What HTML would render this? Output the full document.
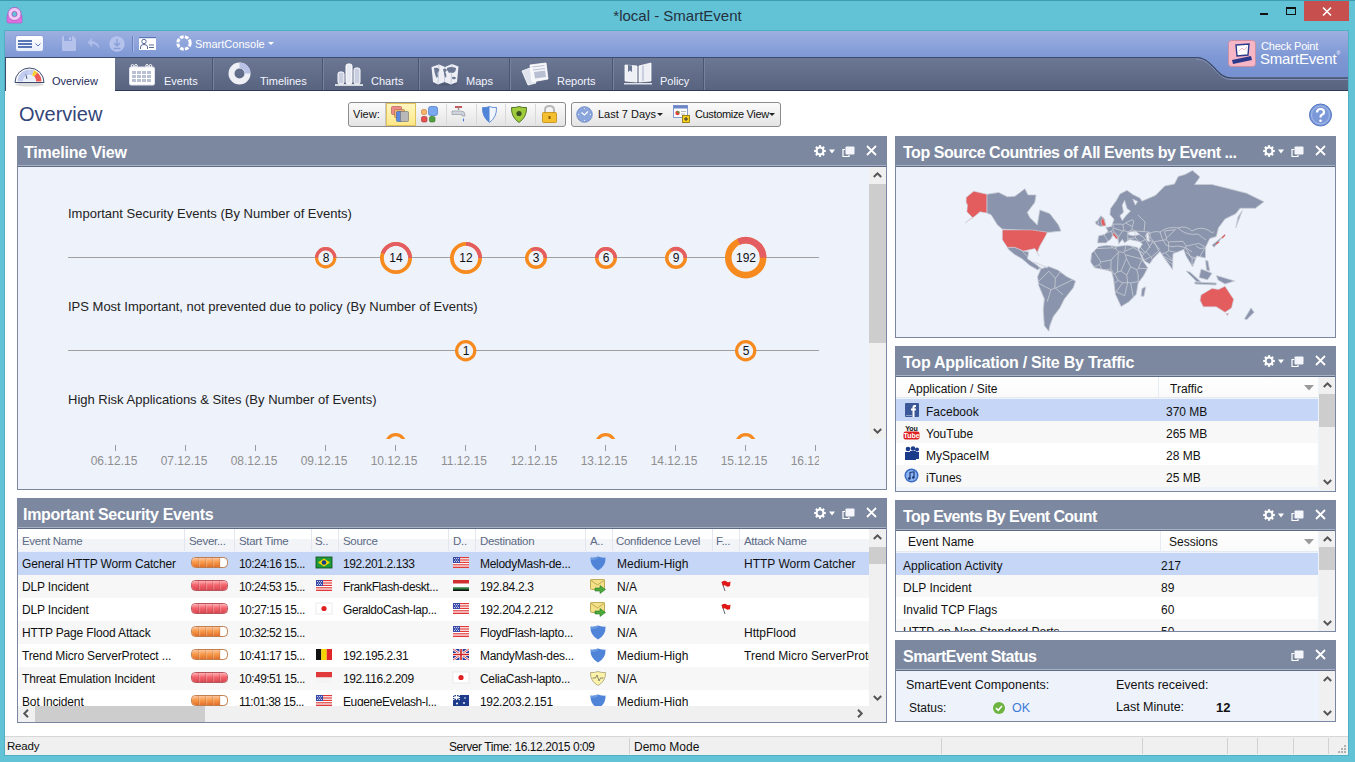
<!DOCTYPE html>
<html><head><meta charset="utf-8">
<style>
*{margin:0;padding:0;box-sizing:border-box}
html,body{width:1355px;height:762px;overflow:hidden;background:#62c3d6;font-family:"Liberation Sans",sans-serif;position:relative;color:#111}
.a{position:absolute}
.nw{white-space:nowrap}
svg{position:absolute;overflow:visible}
#title{left:0;top:7px;width:1355px;text-align:center;font-size:15px;color:#25303f}
#win{left:4px;top:30px;width:1345px;height:726px;background:#fff;border:1px solid #4fb0c4}
#toolbar{left:5px;top:31px;width:1343px;height:26px;background:linear-gradient(#9cafe0,#7e98d5)}
#tabs{left:5px;top:57px;width:1343px;height:34px;background:linear-gradient(#6b7793,#58637f);border-top:1px solid #3f4b6b;border-bottom:1px solid #2f3a58}
.tab{position:absolute;top:58px;height:32px;border-right:1px solid #4b5672;box-shadow:1px 0 0 #77829c}
.tabt{position:absolute;top:75px;font-size:11px;color:#f4f6ff}
.panel{position:absolute;border:1px solid #7b87a0;background:#eef2fb;overflow:hidden}
.ph{position:absolute;left:0;top:0;right:0;height:30px;background:#7c88a0;border-bottom:1px solid #5e6a86}
.ph:after{content:"";position:absolute;left:0;right:0;bottom:0;height:1px;background:#a9b2c5}
.ph .t{position:absolute;left:7px;top:6.5px;font-size:16px;font-weight:bold;color:#fff;white-space:nowrap;letter-spacing:-0.4px}
#status{left:5px;top:736px;width:1343px;height:19px;background:#f0f0f0;border-top:1px solid #d7d7d7}
.sep{position:absolute;top:738px;width:1px;height:16px;background:#d2d2d2}
.tl{position:absolute;font-size:13px;color:#222;white-space:nowrap}
.hl{position:absolute;height:1px;background:#a0a0a0}
.dt{position:absolute;top:453px;font-size:12px;color:#8f8f8f;white-space:nowrap}
.tk{position:absolute;top:445px;width:1px;height:6px;background:#9a9a9a}
.vsb{position:absolute;width:17px;background:#f0f0f0}
.thumb{position:absolute;background:#cdcdcd}
.row{position:absolute;left:0;height:23px}
.cell{position:absolute;font-size:12px;color:#111;white-space:nowrap}
</style></head><body>
<!-- title bar -->
<div class="a" style="left:0;top:0;width:1355px;height:1px;background:#3f9db1"></div>
<svg style="left:6px;top:6px" width="18" height="18" viewBox="0 0 18 18">
  <rect x="1" y="9" width="15" height="8" rx="1.5" fill="#e070e0" stroke="#b84fc0" stroke-width="0.6"/>
  <circle cx="8.5" cy="8" r="6.6" fill="#f0c8f4" stroke="#a94cbf" stroke-width="0.8"/>
  <circle cx="8.5" cy="8" r="2.6" fill="#62c3d6" stroke="#a94cbf" stroke-width="0.8"/>
</svg>
<div class="a" id="title">*local - SmartEvent</div>
<div class="a" style="left:1260px;top:13px;width:8px;height:2px;background:#111"></div>
<div class="a" style="left:1286px;top:7px;width:10px;height:8px;border:1px solid #111;border-top-width:2px"></div>
<div class="a" style="left:1304px;top:1px;width:45px;height:20px;background:#c7504f"></div>
<svg style="left:1322px;top:7px" width="10" height="9" viewBox="0 0 10 9"><path d="M1 0.5L9 8.5M9 0.5L1 8.5" stroke="#fff" stroke-width="1.6"/></svg>

<div class="a" id="win"></div>
<div class="a" id="toolbar"></div>
<div class="a" id="tabs"></div>
<!-- right curve area of toolbar -->
<svg style="left:1180px;top:57px" width="168" height="34" viewBox="0 0 168 34">
  <defs><linearGradient id="tg" x1="0" y1="0" x2="0" y2="1"><stop offset="0" stop-color="#7e98d5"/><stop offset="1" stop-color="#7690d0"/></linearGradient></defs>
  <path d="M0 0 L16 0 C24 0 28 4 34 10 C40 17 44 20.5 52 20.5 L168 20.5 L168 0 Z" fill="url(#tg)"/>
  <path d="M0 0.5 L16 0.5 C24 0.5 28 4.5 34 10.5 C40 17.5 44 21 52 21 L168 21" fill="none" stroke="#3f4b6b" stroke-width="1.2"/>
  <path d="M16 2 C24 2 28 6 34 12 C40 19 44 22.5 52 22.5 L168 22.5" fill="none" stroke="#8a9ac4" stroke-width="1" opacity="0.8"/>
</svg>


<!-- curve fix -->
<!-- toolbar buttons -->
<div class="a" style="left:16px;top:36px;width:27px;height:15px;background:linear-gradient(#fff,#e8eefc);border-radius:2px;box-shadow:0 0 0 1px #8aa0d8"></div>
<div class="a" style="left:18px;top:40px;width:14px;height:2px;background:#5a74b8"></div>
<div class="a" style="left:18px;top:43px;width:14px;height:2px;background:#5a74b8"></div>
<div class="a" style="left:18px;top:46px;width:14px;height:2px;background:#5a74b8"></div>
<svg style="left:35px;top:43px" width="6" height="4" viewBox="0 0 6 4"><path d="M0.5 0.5L3 3L5.5 0.5" fill="none" stroke="#5a74b8" stroke-width="1"/></svg>
<!-- save -->
<svg style="left:62px;top:36px" width="14" height="15" viewBox="0 0 14 15"><path d="M0 1.5Q0 0 1.5 0H11L14 3V13.5Q14 15 12.5 15H1.5Q0 15 0 13.5Z" fill="#b5c3ec"/><rect x="2" y="0" width="8" height="5" fill="#8fa5dd"/><rect x="7" y="1" width="2" height="3" fill="#b5c3ec"/></svg>
<!-- undo -->
<svg style="left:87px;top:37px" width="14" height="15" viewBox="0 0 14 15"><path d="M5 1L0.5 5.5L5 10V7Q10 7 12 12Q12.5 5 5 4Z" fill="#aebdea"/></svg>
<!-- download -->
<svg style="left:109px;top:36px" width="16" height="16" viewBox="0 0 16 16"><circle cx="8" cy="8" r="7.7" fill="#b5c3ec"/><path d="M8 3V10M5 7L8 10L11 7M4.5 12.5H11.5" fill="none" stroke="#8ba0da" stroke-width="1.5"/></svg>
<div class="a" style="left:132px;top:36px;width:1px;height:16px;background:#6a80bf;box-shadow:1px 0 0 #aab9e6"></div>
<!-- contact card -->
<svg style="left:139px;top:37px" width="17" height="13" viewBox="0 0 17 13"><rect x="0" y="0" width="17" height="13" fill="#fff"/><rect x="0" y="0" width="17" height="1.2" fill="#5a74b8"/><circle cx="5" cy="4.5" r="2.2" fill="none" stroke="#5a6c9a" stroke-width="1"/><path d="M1.5 12V10Q1.5 7.5 5 7.5Q8.5 7.5 8.5 10V12" fill="none" stroke="#5a6c9a" stroke-width="1"/><path d="M10 8H15M10 10.5H15" stroke="#5a6c9a" stroke-width="1"/></svg>
<!-- SmartConsole -->
<svg style="left:176px;top:35px" width="16" height="16" viewBox="0 0 16 16"><circle cx="8" cy="8" r="6.2" fill="none" stroke="#fff" stroke-width="3" stroke-dasharray="3.6 1.3"/></svg>
<div class="a nw" style="left:195px;top:38px;font-size:11px;color:#fff">SmartConsole</div>
<svg style="left:268px;top:42px" width="6" height="4" viewBox="0 0 6 4"><path d="M0 0H6L3 3Z" fill="#fff"/></svg>

<!-- tabs -->
<div class="a" style="left:5px;top:57px;width:110px;height:34px;background:#fff;border-left:1px solid #3f4b6b;border-top:1px solid #3f4b6b"></div>
<div class="tab" style="left:115px;width:98px"></div>
<div class="tab" style="left:213px;width:110px"></div>
<div class="tab" style="left:323px;width:96px"></div>
<div class="tab" style="left:419px;width:91px"></div>
<div class="tab" style="left:510px;width:103px"></div>
<div class="tab" style="left:613px;width:91px"></div>
<!-- overview gauge -->
<svg style="left:14px;top:65px" width="31" height="22" viewBox="0 0 31 22">
  <ellipse cx="15.5" cy="19.5" rx="14" ry="2" fill="#ccc" opacity="0.7"/>
  <path d="M1 17.5A14.5 14.5 0 0 1 30 17.5Z" fill="#fff" stroke="#3d4a6e" stroke-width="1"/>
  <path d="M3.5 16.5A12 12 0 0 1 15.5 4.5V10A6.5 6.5 0 0 0 9 16.5Z" fill="#c2cbf0"/>
  <path d="M15.5 4.5A12 12 0 0 1 20 5.3L18 10.5A6.5 6.5 0 0 0 15.5 10Z" fill="#c2cbf0"/>
  <path d="M20 5.3A12 12 0 0 1 23.5 7.5L20.2 11.5A6.5 6.5 0 0 0 18 10.5Z" fill="#f5cf30"/>
  <path d="M23.5 7.5A12 12 0 0 1 27.5 16.5H22A6.5 6.5 0 0 0 20.2 11.5Z" fill="#ee5a55"/>
  <path d="M9 16.5A6.5 6.5 0 0 1 22 16.5Z" fill="#e8eef8"/>
  <path d="M11.5 8L13.5 13.5L12.2 13.8Z" fill="#3d4a6e"/>
</svg>
<div class="a nw" style="left:52px;top:75px;font-size:11px;color:#1e2b5a">Overview</div>
<!-- events calendar -->
<svg style="left:129px;top:64px" width="27" height="22" viewBox="0 0 27 22">
  <rect x="0.5" y="3" width="25" height="18" rx="1.5" fill="#fff" stroke="#dfe3ee" stroke-width="1"/>
  <g fill="#b9c0d4"><rect x="3" y="7" width="4" height="3"/><rect x="8" y="7" width="4" height="3"/><rect x="13" y="7" width="4" height="3"/><rect x="18" y="7" width="4" height="3"/><rect x="3" y="11" width="4" height="3"/><rect x="8" y="11" width="4" height="3"/><rect x="13" y="11" width="4" height="3"/><rect x="18" y="11" width="4" height="3"/><rect x="3" y="15" width="4" height="3"/><rect x="8" y="15" width="4" height="3"/><rect x="13" y="15" width="4" height="3"/><rect x="18" y="15" width="4" height="3"/></g>
  <g fill="none" stroke="#fff" stroke-width="1"><circle cx="3.5" cy="1.8" r="1.3"/><circle cx="7" cy="1.8" r="1.3"/><circle cx="18" cy="1.8" r="1.3"/><circle cx="21.5" cy="1.8" r="1.3"/></g>
</svg>
<div class="tabt nw" style="left:164px">Events</div>
<!-- timelines donut -->
<svg style="left:228px;top:62px" width="24" height="24" viewBox="0 0 24 24">
  <circle cx="11.5" cy="11.5" r="8" fill="none" stroke="#eef0f6" stroke-width="6"/>
  <path d="M11.5 0.5A11 11 0 0 1 22.5 11.5H17A5.5 5.5 0 0 0 11.5 6Z" fill="#b9c2e6"/>
</svg>
<div class="tabt nw" style="left:260px">Timelines</div>
<!-- charts -->
<svg style="left:335px;top:63px" width="28" height="24" viewBox="0 0 28 24">
  <rect x="3" y="9" width="6" height="12" rx="2" fill="#c9cee0" stroke="#fff" stroke-width="1"/>
  <rect x="11" y="1" width="6" height="20" rx="2" fill="#e8ebf4" stroke="#fff" stroke-width="1"/>
  <rect x="19" y="5" width="6" height="16" rx="2" fill="#c9cee0" stroke="#fff" stroke-width="1"/>
  <path d="M0 22H28" stroke="#fff" stroke-width="1.5"/>
</svg>
<div class="tabt nw" style="left:371px">Charts</div>
<!-- maps -->
<svg style="left:431px;top:63px" width="28" height="23" viewBox="0 0 28 23">
  <ellipse cx="14" cy="21.5" rx="12" ry="1.3" fill="#4b5670" opacity="0.6"/>
  <path d="M0.5 4L8 1.5L14 4L21 1L27.5 3.5L26 19L20 21.5L13.5 19L7 21.5L2 19Z" fill="#eef0f6"/>
  <path d="M8 1.5L7 21.5M14 4L13.5 19M21 1L20 21.5" stroke="#b8bfd2" stroke-width="0.8"/>
  <path d="M3 5Q6 4 8 6Q9 8 7 9Q6 11 7 13Q6 16 5 14Q4 11 3.5 9Z" fill="#6b7793"/>
  <path d="M12 6Q15 5 16 7Q15 9 14 9Q16 11 15 15Q13 13 13 10Z" fill="#6b7793"/>
  <path d="M16 5Q20 3 25 5Q25 9 22 10Q20 9 18 10Q17 8 16 7Z" fill="#6b7793"/>
  <path d="M21 14Q24 13 25 15Q24 17 21.5 16Z" fill="#6b7793"/>
</svg>
<div class="tabt nw" style="left:466px">Maps</div>
<!-- reports -->
<svg style="left:521px;top:63px" width="28" height="23" viewBox="0 0 28 23">
  <path d="M1 8L9 5L15 20L7 22Z" fill="#dfe3ee" stroke="#fff" stroke-width="0.8"/>
  <path d="M9 2L25 0L27 16L11 19Z" fill="#f4f6fa" stroke="#fff" stroke-width="0.8"/>
  <path d="M11.5 4L23.5 2.5M12 7L24 5.5" stroke="#b8bfd2" stroke-width="1.2"/>
  <path d="M13 9L24 7.5L25 14L14 15.5Z" fill="#b8bfd2"/>
</svg>
<div class="tabt nw" style="left:557px">Reports</div>
<!-- policy -->
<svg style="left:624px;top:63px" width="29" height="23" viewBox="0 0 29 23">
  <path d="M1 2L13 3V19L1 18Z" fill="#eef0f6" stroke="#fff" stroke-width="0.8"/>
  <path d="M15 3L27 0V18L15 19Z" fill="#eef0f6" stroke="#fff" stroke-width="0.8"/>
  <path d="M4 2V9L6 7.5L8 9V2.5Z" fill="#6b7793"/>
  <path d="M18 3L20 2.5V17.5L18 18Z" fill="#c9cee0"/>
  <path d="M0 20H28V21.5H0Z" fill="#dfe3ee"/>
</svg>
<div class="tabt nw" style="left:660px">Policy</div>

<!-- logo -->
<svg style="left:1228px;top:40px" width="28" height="27" viewBox="0 0 28 27">
  <rect x="0.5" y="0.5" width="27" height="26" rx="3" fill="#f7b6c6" stroke="#c98a9a" stroke-width="0.8"/>
  <path d="M8 5L21 4L20 15L9 16Z" fill="#fff" stroke="#2b3a8a" stroke-width="1.4"/>
  <path d="M11 11L14 8L16 10L19 7" fill="none" stroke="#e9a0b0" stroke-width="0.8"/>
  <path d="M4 20L23 16L24 20L5 24Z" fill="#2b3a8a"/>
</svg>
<div class="a nw" style="left:1261px;top:40px;font-size:11px;color:#fff;letter-spacing:-0.2px">Check Point</div>
<div class="a nw" style="left:1260px;top:50px;font-size:15px;color:#fff;letter-spacing:-0.2px">SmartEvent<span style="font-size:5px;vertical-align:top">&#174;</span></div>

<!-- page header -->
<div class="a nw" style="left:19px;top:103px;font-size:20px;color:#34457a">Overview</div>
<div class="a" style="left:348px;top:102px;width:218px;height:25px;border:1px solid #8c8c8c;border-radius:3px;background:linear-gradient(#fbfbfb,#e4e4e4)"></div>
<div class="a nw" style="left:353px;top:108px;font-size:11px;color:#111">View:</div>
<div class="a" style="left:385px;top:103px;width:1px;height:23px;background:#c8c8c8"></div>
<div class="a" style="left:386px;top:103px;width:30px;height:23px;background:linear-gradient(#fff6c0,#fde888);border:1px solid #e2c25a"></div>
<div class="a" style="left:446px;top:104px;width:1px;height:21px;background:#d8d8d8"></div>
<div class="a" style="left:476px;top:104px;width:1px;height:21px;background:#d8d8d8"></div>
<div class="a" style="left:505px;top:104px;width:1px;height:21px;background:#d8d8d8"></div>
<div class="a" style="left:535px;top:104px;width:1px;height:21px;background:#d8d8d8"></div>
<svg style="left:391px;top:106px" width="18" height="16" viewBox="0 0 18 16">
  <rect x="0.5" y="0.5" width="10" height="8" rx="1" fill="#f08a8a" stroke="#a05050" stroke-width="0.6"/>
  <rect x="3.5" y="3.5" width="10" height="8" rx="1" fill="#f0b070" stroke="#a07040" stroke-width="0.6"/>
  <rect x="5.5" y="5.5" width="6" height="10" rx="1" fill="#5a8ae0" stroke="#3a5aa0" stroke-width="0.6"/>
  <rect x="9.5" y="5.5" width="8" height="10" rx="1" fill="#b8b8b8" stroke="#707070" stroke-width="0.6"/>
</svg>
<svg style="left:421px;top:106px" width="18" height="17" viewBox="0 0 18 17">
  <rect x="0.5" y="3.5" width="5" height="5" rx="1.5" fill="#f6b46a" stroke="#c07a30" stroke-width="0.6"/>
  <rect x="7.5" y="0.5" width="9" height="9" rx="2" fill="#7aa8f0" stroke="#3a6ac0" stroke-width="0.6"/>
  <rect x="0.5" y="10.5" width="5.5" height="5.5" rx="1.5" fill="#e85050" stroke="#a03030" stroke-width="0.6"/>
  <rect x="8.5" y="10.5" width="5.5" height="5.5" rx="1.5" fill="#50a040" stroke="#307020" stroke-width="0.6"/>
</svg>
<svg style="left:452px;top:106px" width="16" height="18" viewBox="0 0 16 18">
  <path d="M3 1H10" stroke="#c03030" stroke-width="1.6"/><path d="M6.5 1V4" stroke="#909090" stroke-width="1.5"/>
  <path d="M0 5H9Q13 5 13 9V10H10V8.5H0Z" fill="#d0d4dc" stroke="#8a8f9a" stroke-width="0.6"/>
  <path d="M11.5 12Q13 14.5 11.5 16Q10 14.5 11.5 12Z" fill="#2a6ad0"/>
</svg>
<svg style="left:482px;top:106px" width="15" height="17" viewBox="0 0 15 17">
  <path d="M7.5 0.5Q11 2 14.5 1.5Q15 11 7.5 16.5Q0 11 0.5 1.5Q4 2 7.5 0.5Z" fill="#f0f4fb" stroke="#4a7ad0" stroke-width="0.8"/>
  <path d="M7.5 0.5Q4 2 0.5 1.5Q0 11 7.5 16.5Z" fill="#4f84d8"/>
</svg>
<svg style="left:511px;top:106px" width="16" height="17" viewBox="0 0 16 17">
  <path d="M8 0.5Q12 2 15.5 1.5Q16 11 8 16.5Q0 11 0.5 1.5Q4 2 8 0.5Z" fill="#9fcc3a" stroke="#55752a" stroke-width="1"/>
  <circle cx="8" cy="7.5" r="2.6" fill="#3a5020"/>
</svg>
<svg style="left:542px;top:105px" width="15" height="18" viewBox="0 0 15 18">
  <path d="M3 8V5Q3 1 7.5 1Q12 1 12 5V8" fill="none" stroke="#b8b8b8" stroke-width="2"/>
  <rect x="0.5" y="7.5" width="14" height="10" rx="1" fill="#f5c030" stroke="#c08a10" stroke-width="0.8"/>
  <rect x="6.5" y="11" width="2" height="3" fill="#8a5a00"/>
</svg>

<div class="a" style="left:571px;top:102px;width:210px;height:25px;border:1px solid #8c8c8c;border-radius:3px;background:linear-gradient(#fbfbfb,#e4e4e4)"></div>
<svg style="left:576px;top:106px" width="17" height="17" viewBox="0 0 17 17">
  <circle cx="8.5" cy="8.5" r="7.8" fill="#8aa4dc" stroke="#6a86c6" stroke-width="0.8"/>
  <g fill="#dfe8fa"><circle cx="8.5" cy="2.6" r="0.7"/><circle cx="8.5" cy="14.4" r="0.7"/><circle cx="2.6" cy="8.5" r="0.7"/><circle cx="14.4" cy="8.5" r="0.7"/></g>
  <path d="M5.5 6.5L8.5 9L12 5.5" fill="none" stroke="#fff" stroke-width="1.1"/>
</svg>
<div class="a nw" style="left:598px;top:108px;font-size:11px;color:#111">Last 7 Days</div>
<svg style="left:657px;top:113px" width="6" height="4" viewBox="0 0 6 4"><path d="M0 0H6L3 3Z" fill="#222"/></svg>
<svg style="left:673px;top:105px" width="18" height="18" viewBox="0 0 18 18">
  <rect x="0.5" y="0.5" width="14" height="12" fill="#fff" stroke="#6a86c6" stroke-width="0.8"/>
  <rect x="0.5" y="0.5" width="14" height="3" fill="#6a86c6"/>
  <circle cx="4.5" cy="8" r="2.2" fill="#e04040"/><path d="M4.5 8V5.8A2.2 2.2 0 0 1 6.7 8Z" fill="#50a040"/>
  <path d="M8 6.5H13M8 9H12" stroke="#9aa" stroke-width="0.8"/>
  <rect x="9.5" y="10.5" width="7" height="7" fill="#f5d020" stroke="#8a7000" stroke-width="0.8"/>
  <path d="M13 12V16M11 14H15" stroke="#333" stroke-width="1"/>
</svg>
<div class="a nw" style="left:695px;top:108px;font-size:11px;color:#111;letter-spacing:-0.35px">Customize View</div>
<svg style="left:769px;top:113px" width="6" height="4" viewBox="0 0 6 4"><path d="M0 0H6L3 3Z" fill="#222"/></svg>

<svg style="left:1308px;top:103px" width="25" height="24" viewBox="0 0 25 24">
  <circle cx="12.5" cy="12" r="11" fill="#7b98d8" stroke="#5677c4" stroke-width="1"/>
  <circle cx="12.5" cy="12" r="9" fill="none" stroke="#a8bce8" stroke-width="1"/>
  <path d="M9 9.5Q9 6 12.5 6Q16 6 16 9Q16 11 13.5 12Q12.5 12.6 12.5 14.5" fill="none" stroke="#fff" stroke-width="2.2"/>
  <circle cx="12.5" cy="17.8" r="1.3" fill="#fff"/>
</svg>
<div class="panel" style="left:17px;top:136px;width:870px;height:354px"><div class="ph"><div class="t" style="letter-spacing:-0.2px;left:6px">Timeline View</div></div></div>
<svg style="left:812.5px;top:144px" width="14" height="14" viewBox="-7 -7 14 14"><rect x="-1.1" y="-5.8" width="2.2" height="2.2" fill="#fff" transform="rotate(0)"/><rect x="-1.1" y="-5.8" width="2.2" height="2.2" fill="#fff" transform="rotate(45)"/><rect x="-1.1" y="-5.8" width="2.2" height="2.2" fill="#fff" transform="rotate(90)"/><rect x="-1.1" y="-5.8" width="2.2" height="2.2" fill="#fff" transform="rotate(135)"/><rect x="-1.1" y="-5.8" width="2.2" height="2.2" fill="#fff" transform="rotate(180)"/><rect x="-1.1" y="-5.8" width="2.2" height="2.2" fill="#fff" transform="rotate(225)"/><rect x="-1.1" y="-5.8" width="2.2" height="2.2" fill="#fff" transform="rotate(270)"/><rect x="-1.1" y="-5.8" width="2.2" height="2.2" fill="#fff" transform="rotate(315)"/><circle r="4.4" fill="#fff"/><circle r="2.4" fill="#7c88a0"/></svg><svg style="left:829px;top:149px" width="6" height="5" viewBox="0 0 6 5"><path d="M0 0.5H6L3 4.5Z" fill="#fff"/></svg><svg style="left:842px;top:146px" width="13" height="12" viewBox="0 0 13 12"><path d="M3 3.5H1V10.5H7V9" fill="none" stroke="#fff" stroke-width="1.2"/><rect x="3.5" y="0.5" width="9" height="8" rx="1" fill="#f4f6fb"/></svg><svg style="left:866px;top:145px" width="11" height="11" viewBox="0 0 11 11"><path d="M1 1L10 10M10 1L1 10" stroke="#fff" stroke-width="1.8"/></svg>
<div class="a" style="left:18px;top:167px;width:851px;height:272px;overflow:hidden">
<div class="tl" style="left:50px;top:39px">Important Security Events (By Number of Events)</div><div class="tl" style="left:50px;top:132px">IPS Most Important, not prevented due to policy (By Number of Events)</div><div class="tl" style="left:50px;top:225px">High Risk Applications &amp; Sites (By Number of Events)</div><div class="hl" style="left:50px;top:90px;width:751px"></div><div class="hl" style="left:50px;top:183px;width:751px"></div><div class="hl" style="left:50px;top:276px;width:751px"></div><svg style="left:296.3px;top:79.3px" width="23.4" height="23.4" viewBox="-11.7 -11.7 23.4 23.4"><circle r="9.1" fill="#eef2fb" stroke="#f78a1e" stroke-width="3.2"/><path d="M-9.10 -0.00A9.1 9.1 0 0 1 9.10 -0.00" fill="none" stroke="#e35d62" stroke-width="3.2"/></svg><div class="a nw" style="left:288px;top:84px;width:40px;text-align:center;font-size:12px;color:#111">8</div><svg style="left:361px;top:74px" width="34" height="34" viewBox="-17 -17 34 34"><circle r="14.1" fill="#eef2fb" stroke="#f78a1e" stroke-width="3.8"/><path d="M-13.25 -4.82A14.1 14.1 0 0 1 14.10 -0.00" fill="none" stroke="#e35d62" stroke-width="3.8"/></svg><div class="a nw" style="left:358px;top:84px;width:40px;text-align:center;font-size:12px;color:#111">14</div><svg style="left:431px;top:74px" width="34" height="34" viewBox="-17 -17 34 34"><circle r="14.1" fill="#eef2fb" stroke="#f78a1e" stroke-width="3.8"/><path d="M0.00 -14.10A14.1 14.1 0 0 1 14.10 -0.00" fill="none" stroke="#e35d62" stroke-width="3.8"/></svg><div class="a nw" style="left:428px;top:84px;width:40px;text-align:center;font-size:12px;color:#111">12</div><svg style="left:506px;top:79px" width="24" height="24" viewBox="-12 -12 24 24"><circle r="9.25" fill="#eef2fb" stroke="#f78a1e" stroke-width="3.5"/><path d="M-4.76 -7.93A9.25 9.25 0 0 1 9.25 -0.00" fill="none" stroke="#e35d62" stroke-width="3.5"/></svg><div class="a nw" style="left:498px;top:84px;width:40px;text-align:center;font-size:12px;color:#111">3</div><svg style="left:576px;top:79px" width="24" height="24" viewBox="-12 -12 24 24"><circle r="9.25" fill="#eef2fb" stroke="#f78a1e" stroke-width="3.5"/><path d="M-9.25 -0.00A9.25 9.25 0 0 1 9.25 -0.00" fill="none" stroke="#e35d62" stroke-width="3.5"/></svg><div class="a nw" style="left:568px;top:84px;width:40px;text-align:center;font-size:12px;color:#111">6</div><svg style="left:646px;top:79px" width="24" height="24" viewBox="-12 -12 24 24"><circle r="9.25" fill="#eef2fb" stroke="#f78a1e" stroke-width="3.5"/><path d="M-5.17 -7.67A9.25 9.25 0 0 1 9.25 -0.00" fill="none" stroke="#e35d62" stroke-width="3.5"/></svg><div class="a nw" style="left:638px;top:84px;width:40px;text-align:center;font-size:12px;color:#111">9</div><svg style="left:706.3px;top:69.3px" width="43.4" height="43.4" viewBox="-21.7 -21.7 43.4 43.4"><circle r="17.4" fill="#eef2fb" stroke="#f78a1e" stroke-width="6.6"/><path d="M-7.08 -15.90A17.4 17.4 0 0 1 17.40 -0.00" fill="none" stroke="#e35d62" stroke-width="6.6"/></svg><div class="a nw" style="left:708px;top:84px;width:40px;text-align:center;font-size:12px;color:#111">192</div><svg style="left:436.3px;top:172.3px" width="23.4" height="23.4" viewBox="-11.7 -11.7 23.4 23.4"><circle r="9.1" fill="#eef2fb" stroke="#f78a1e" stroke-width="3.2"/></svg><div class="a nw" style="left:428px;top:177px;width:40px;text-align:center;font-size:12px;color:#111">1</div><svg style="left:716.3px;top:172.3px" width="23.4" height="23.4" viewBox="-11.7 -11.7 23.4 23.4"><circle r="9.1" fill="#eef2fb" stroke="#f78a1e" stroke-width="3.2"/></svg><div class="a nw" style="left:708px;top:177px;width:40px;text-align:center;font-size:12px;color:#111">5</div><svg style="left:366.3px;top:265.3px" width="23.4" height="23.4" viewBox="-11.7 -11.7 23.4 23.4"><circle r="9.1" fill="#eef2fb" stroke="#f78a1e" stroke-width="3.2"/></svg><svg style="left:576.3px;top:265.3px" width="23.4" height="23.4" viewBox="-11.7 -11.7 23.4 23.4"><circle r="9.1" fill="#eef2fb" stroke="#f78a1e" stroke-width="3.2"/></svg><svg style="left:716.3px;top:265.3px" width="23.4" height="23.4" viewBox="-11.7 -11.7 23.4 23.4"><circle r="9.1" fill="#eef2fb" stroke="#f78a1e" stroke-width="3.2"/></svg>
</div>
<div class="vsb" style="left:869px;top:167px;height:272px;width:17px;background:#f0f0f0"></div><div class="thumb" style="left:869px;top:184px;width:17px;height:159px"></div><svg style="left:873px;top:172px" width="9" height="6" viewBox="0 0 9 6"><path d="M0.8 5L4.5 1.3L8.2 5" fill="none" stroke="#555" stroke-width="2"/></svg><svg style="left:873px;top:428px" width="9" height="6" viewBox="0 0 9 6"><path d="M0.8 1L4.5 4.7L8.2 1" fill="none" stroke="#555" stroke-width="2"/></svg>
<div class="a" style="left:18px;top:440px;width:801px;height:40px;overflow:hidden">
<div class="tk" style="left:97px;top:5px"></div>
<div class="dt" style="left:66px;top:14px;width:60px;text-align:center">06.12.15</div>
<div class="tk" style="left:167px;top:5px"></div>
<div class="dt" style="left:136px;top:14px;width:60px;text-align:center">07.12.15</div>
<div class="tk" style="left:237px;top:5px"></div>
<div class="dt" style="left:206px;top:14px;width:60px;text-align:center">08.12.15</div>
<div class="tk" style="left:307px;top:5px"></div>
<div class="dt" style="left:276px;top:14px;width:60px;text-align:center">09.12.15</div>
<div class="tk" style="left:377px;top:5px"></div>
<div class="dt" style="left:346px;top:14px;width:60px;text-align:center">10.12.15</div>
<div class="tk" style="left:447px;top:5px"></div>
<div class="dt" style="left:416px;top:14px;width:60px;text-align:center">11.12.15</div>
<div class="tk" style="left:517px;top:5px"></div>
<div class="dt" style="left:486px;top:14px;width:60px;text-align:center">12.12.15</div>
<div class="tk" style="left:587px;top:5px"></div>
<div class="dt" style="left:556px;top:14px;width:60px;text-align:center">13.12.15</div>
<div class="tk" style="left:657px;top:5px"></div>
<div class="dt" style="left:626px;top:14px;width:60px;text-align:center">14.12.15</div>
<div class="tk" style="left:727px;top:5px"></div>
<div class="dt" style="left:696px;top:14px;width:60px;text-align:center">15.12.15</div>
<div class="tk" style="left:797px;top:5px"></div>
<div class="dt" style="left:766px;top:14px;width:60px;text-align:center">16.12.15</div>
</div>
<div class="panel" style="left:895px;top:136px;width:441px;height:202px"><div class="ph"><div class="t" style="letter-spacing:-0.47px">Top Source Countries of All Events by Event ...</div></div></div>
<svg style="left:1261.5px;top:144px" width="14" height="14" viewBox="-7 -7 14 14"><rect x="-1.1" y="-5.8" width="2.2" height="2.2" fill="#fff" transform="rotate(0)"/><rect x="-1.1" y="-5.8" width="2.2" height="2.2" fill="#fff" transform="rotate(45)"/><rect x="-1.1" y="-5.8" width="2.2" height="2.2" fill="#fff" transform="rotate(90)"/><rect x="-1.1" y="-5.8" width="2.2" height="2.2" fill="#fff" transform="rotate(135)"/><rect x="-1.1" y="-5.8" width="2.2" height="2.2" fill="#fff" transform="rotate(180)"/><rect x="-1.1" y="-5.8" width="2.2" height="2.2" fill="#fff" transform="rotate(225)"/><rect x="-1.1" y="-5.8" width="2.2" height="2.2" fill="#fff" transform="rotate(270)"/><rect x="-1.1" y="-5.8" width="2.2" height="2.2" fill="#fff" transform="rotate(315)"/><circle r="4.4" fill="#fff"/><circle r="2.4" fill="#7c88a0"/></svg><svg style="left:1278px;top:149px" width="6" height="5" viewBox="0 0 6 5"><path d="M0 0.5H6L3 4.5Z" fill="#fff"/></svg><svg style="left:1291px;top:146px" width="13" height="12" viewBox="0 0 13 12"><path d="M3 3.5H1V10.5H7V9" fill="none" stroke="#fff" stroke-width="1.2"/><rect x="3.5" y="0.5" width="9" height="8" rx="1" fill="#f4f6fb"/></svg><svg style="left:1315px;top:145px" width="11" height="11" viewBox="0 0 11 11"><path d="M1 1L10 10M10 1L1 10" stroke="#fff" stroke-width="1.8"/></svg>
<svg style="left:896px;top:167px" width="439" height="170" viewBox="896 167 439 170"><path d="M986.8 194.3 L998.7 192.4 L1007.4 196.8 L1014.9 196.2 L1024.9 188.7 L1028.0 194.9 L1036.1 194.9 L1034.8 202.4 L1027.3 212.4 L1029.8 217.4 L1037.3 224.9 L1039.8 209.9 L1049.8 213.6 L1058.5 224.9 L1061.0 231.1 L1049.8 232.3 L1046.0 232.3 L1034.8 231.1 L1002.4 229.2 L997.4 224.9 L991.2 214.9 L986.8 213.0Z" fill="#8a95ad" stroke="#c9cdd6" stroke-width="0.8" stroke-linejoin="round"/><path d="M1007.4 247.3 L1014.9 247.3 L1023.6 251.1 L1028.7 252.0 L1027.5 258.8 L1034.2 263.2 L1040.9 268.1 L1037.6 269.9 L1029.8 265.4 L1022.0 258.8 L1014.2 254.3 L1008.6 249.5Z" fill="#8a95ad" stroke="#c9cdd6" stroke-width="0.8" stroke-linejoin="round"/><path d="M1040.9 268.8 L1048.8 266.6 L1057.7 269.9 L1066.6 276.6 L1075.5 281.1 L1073.3 287.8 L1064.4 298.9 L1059.9 307.9 L1053.2 316.8 L1049.9 325.7 L1048.8 331.3 L1044.3 325.7 L1043.2 310.1 L1044.3 298.9 L1038.7 285.5 L1037.6 276.6Z" fill="#8a95ad" stroke="#c9cdd6" stroke-width="0.8" stroke-linejoin="round"/><path d="M1109.9 214.5 L1110.5 208.6 L1116.4 200.4 L1119.9 193.9 L1127.0 190.3 L1132.9 194.5 L1140.0 198.0 L1142.0 201.1 L1155.3 195.4 L1164.8 185.9 L1174.4 184.0 L1178.2 176.4 L1185.0 174.5 L1192.5 170.4 L1200.0 176.9 L1194.6 184.5 L1212.0 184.5 L1225.0 187.7 L1246.6 193.2 L1264.0 201.8 L1255.3 208.3 L1240.1 208.3 L1235.8 213.7 L1225.0 219.1 L1218.5 227.8 L1216.3 236.5 L1209.8 238.6 L1205.5 247.3 L1205.5 258.1 L1196.8 255.9 L1192.5 266.8 L1186.0 255.9 L1183.8 249.5 L1173.0 253.8 L1172.5 269.6 L1164.3 258.1 L1160.0 251.6 L1153.4 258.2 L1149.6 263.9 L1144.5 261.0 L1138.8 249.5 L1142.4 244.1 L1140.0 241.7 L1129.4 239.4 L1124.6 242.9 L1122.3 239.4 L1118.7 244.1 L1117.5 237.0 L1113.4 234.6 L1110.5 239.4 L1105.7 242.9 L1097.5 242.9 L1098.6 235.8 L1104.5 234.6 L1108.1 231.1 L1105.7 227.5 L1111.6 226.4 L1112.8 222.8 L1114.0 219.3Z" fill="#8a95ad" stroke="#c9cdd6" stroke-width="0.8" stroke-linejoin="round"/><path d="M1091.5 253.5 L1098.6 246.4 L1106.9 245.3 L1116.4 246.4 L1127.0 245.3 L1132.9 246.4 L1137.6 247.6 L1143.5 261.8 L1147.7 267.7 L1143.9 275.3 L1138.2 282.9 L1136.3 294.3 L1128.7 301.9 L1121.1 306.6 L1115.4 294.3 L1113.5 279.1 L1111.6 271.5 L1104.0 269.6 L1094.5 267.7 L1090.7 262.0Z" fill="#8a95ad" stroke="#c9cdd6" stroke-width="0.8" stroke-linejoin="round"/><path d="M1142.0 288.6 L1145.8 286.7 L1143.9 296.2 L1141.1 296.2Z" fill="#8a95ad" stroke="#c9cdd6" stroke-width="0.8" stroke-linejoin="round"/><path d="M1186.0 271.1 L1190.0 272.0 L1201.1 281.9 L1197.0 282.0Z" fill="#8a95ad" stroke="#c9cdd6" stroke-width="0.8" stroke-linejoin="round"/><path d="M1194.6 281.9 L1216.3 283.1 L1216.0 285.0 L1195.0 284.0Z" fill="#8a95ad" stroke="#c9cdd6" stroke-width="0.8" stroke-linejoin="round"/><path d="M1201.1 269.0 L1212.0 273.3 L1207.6 279.8 L1199.0 277.6Z" fill="#8a95ad" stroke="#c9cdd6" stroke-width="0.8" stroke-linejoin="round"/><path d="M1205.5 260.3 L1208.0 261.0 L1209.8 271.1 L1206.5 270.0Z" fill="#8a95ad" stroke="#c9cdd6" stroke-width="0.8" stroke-linejoin="round"/><path d="M1216.3 275.4 L1234.7 280.9 L1225.0 284.1 L1218.0 280.0Z" fill="#8a95ad" stroke="#c9cdd6" stroke-width="0.8" stroke-linejoin="round"/><path d="M1251.0 307.9 L1254.2 312.3 L1246.6 319.8 L1244.5 318.7Z" fill="#8a95ad" stroke="#c9cdd6" stroke-width="0.8" stroke-linejoin="round"/><path d="M1225.0 234.3 L1214.1 247.3 L1212.0 245.1 L1222.8 236.5Z" fill="#8a95ad" stroke="#c9cdd6" stroke-width="0.8" stroke-linejoin="round"/><path d="M1242.3 210.5 L1235.8 227.8 L1238.0 217.0Z" fill="#8a95ad" stroke="#c9cdd6" stroke-width="0.8" stroke-linejoin="round"/><path d="M1097.5 220.5 L1101.0 215.7 L1104.5 219.3 L1105.7 225.2 L1101.0 226.4 L1097.5 225.2Z" fill="#8a95ad" stroke="#c9cdd6" stroke-width="0.8" stroke-linejoin="round"/><path d="M1095.5 221.5 L1098.0 220.5 L1098.5 224.0 L1096.0 224.5Z" fill="#8a95ad" stroke="#c9cdd6" stroke-width="0.8" stroke-linejoin="round"/><path d="M1128.2 232.3 L1135.3 231.1 L1140.0 234.6 L1132.9 235.8 L1128.2 234.6Z" fill="#eef2fb" stroke="#c9cdd6" stroke-width="0.8"/><path d="M1145.9 234.6 L1148.3 232.3 L1149.4 241.7 L1147.1 240.5Z" fill="#eef2fb" stroke="#c9cdd6" stroke-width="0.8"/><path d="M1122.3 205.1 L1124.6 200.4 L1127.0 208.6 L1130.5 211.0 L1125.8 215.7 L1122.3 220.5 L1119.9 215.7 L1123.5 212.2Z" fill="#eef2fb" stroke="#c9cdd6" stroke-width="0.8"/><path d="M1132.9 199.2 L1137.6 201.5 L1135.3 205.1Z" fill="#eef2fb" stroke="#c9cdd6" stroke-width="0.8"/><path d="M966.2 197.4 L973.7 191.2 L986.8 194.3 L986.8 213.0 L980.0 211.8 L975.0 216.1 L965.0 223.0 L972.5 217.4 L966.9 211.8 L967.5 204.9 L966.2 202.4Z" fill="#e35c5e" stroke="#c9cdd6" stroke-width="0.6"/><path d="M1002.4 229.9 L1032.3 229.9 L1047.3 232.3 L1044.8 237.3 L1039.8 246.1 L1037.3 252.3 L1034.8 248.6 L1023.6 251.1 L1014.9 247.3 L1007.4 247.3 L1002.4 239.8Z" fill="#e35c5e" stroke="#c9cdd6" stroke-width="0.6"/><path d="M1201.1 294.9 L1212.0 288.4 L1218.5 289.5 L1225.0 286.3 L1233.6 299.3 L1231.5 307.9 L1225.0 312.3 L1216.3 306.8 L1203.3 306.8 L1200.1 300.3Z" fill="#e35c5e" stroke="#c9cdd6" stroke-width="0.6"/><path d="M1226.0 313.5 L1228.5 313.5 L1227.5 315.5Z" fill="#e35c5e" stroke="#c9cdd6" stroke-width="0.6"/><path d="M1100.8 221.0 L1103.1 217.3 L1105.9 225.8 L1102.1 225.8Z" fill="#e35c5e" stroke="#c9cdd6" stroke-width="0.6"/><path d="M1113.5 232.5 L1118.3 238.2 L1116.4 239.1 L1112.6 234.4Z" fill="#e35c5e" stroke="#c9cdd6" stroke-width="0.6"/><defs><clipPath id="landclip"><path d="M1109.9 214.5 L1110.5 208.6 L1116.4 200.4 L1119.9 193.9 L1127.0 190.3 L1132.9 194.5 L1140.0 198.0 L1142.0 201.1 L1155.3 195.4 L1164.8 185.9 L1174.4 184.0 L1178.2 176.4 L1185.0 174.5 L1192.5 170.4 L1200.0 176.9 L1194.6 184.5 L1212.0 184.5 L1225.0 187.7 L1246.6 193.2 L1264.0 201.8 L1255.3 208.3 L1240.1 208.3 L1235.8 213.7 L1225.0 219.1 L1218.5 227.8 L1216.3 236.5 L1209.8 238.6 L1205.5 247.3 L1205.5 258.1 L1196.8 255.9 L1192.5 266.8 L1186.0 255.9 L1183.8 249.5 L1173.0 253.8 L1172.5 269.6 L1164.3 258.1 L1160.0 251.6 L1153.4 258.2 L1149.6 263.9 L1144.5 261.0 L1138.8 249.5 L1142.4 244.1 L1140.0 241.7 L1129.4 239.4 L1124.6 242.9 L1122.3 239.4 L1118.7 244.1 L1117.5 237.0 L1113.4 234.6 L1110.5 239.4 L1105.7 242.9 L1097.5 242.9 L1098.6 235.8 L1104.5 234.6 L1108.1 231.1 L1105.7 227.5 L1111.6 226.4 L1112.8 222.8 L1114.0 219.3Z"/><path d="M1091.5 253.5 L1098.6 246.4 L1106.9 245.3 L1116.4 246.4 L1127.0 245.3 L1132.9 246.4 L1137.6 247.6 L1143.5 261.8 L1147.7 267.7 L1143.9 275.3 L1138.2 282.9 L1136.3 294.3 L1128.7 301.9 L1121.1 306.6 L1115.4 294.3 L1113.5 279.1 L1111.6 271.5 L1104.0 269.6 L1094.5 267.7 L1090.7 262.0Z"/><path d="M1040.9 268.8 L1048.8 266.6 L1057.7 269.9 L1066.6 276.6 L1075.5 281.1 L1073.3 287.8 L1064.4 298.9 L1059.9 307.9 L1053.2 316.8 L1049.9 325.7 L1048.8 331.3 L1044.3 325.7 L1043.2 310.1 L1044.3 298.9 L1038.7 285.5 L1037.6 276.6Z"/><path d="M1007.4 247.3 L1014.9 247.3 L1023.6 251.1 L1028.7 252.0 L1027.5 258.8 L1034.2 263.2 L1040.9 268.1 L1037.6 269.9 L1029.8 265.4 L1022.0 258.8 L1014.2 254.3 L1008.6 249.5Z"/><path d="M1186.0 271.1 L1190.0 272.0 L1201.1 281.9 L1197.0 282.0Z"/><path d="M1194.6 281.9 L1216.3 283.1 L1216.0 285.0 L1195.0 284.0Z"/><path d="M1201.1 269.0 L1212.0 273.3 L1207.6 279.8 L1199.0 277.6Z"/></clipPath></defs><path d="M1022.7 250.6L1023.6 252.7 M1047.3 301.5L1050.9 289.7 M1050.9 289.7L1037.3 282.6 M1104.7 221.9L1101.5 232.8 M1023.6 252.7L1030.1 259.4 M1050.9 289.7L1054.8 288.1 M1037.3 282.6L1048.9 271.2 M1048.9 271.2L1055.4 278.4 M1055.4 278.4L1054.8 288.1 M1116.2 291.8L1122.6 282.8 M1116.2 291.8L1124.7 295.7 M1122.6 282.8L1127.7 282.6 M1124.7 295.7L1127.7 282.6 M1191.5 265.0L1191.9 264.5 M1191.9 264.5L1202.2 264.9 M1209.1 269.3L1202.2 264.9 M1218.2 261.9L1209.1 269.3 M1191.9 264.5L1192.2 259.1 M1202.2 264.9L1199.2 257.7 M1199.2 257.7L1192.2 259.1 M1199.2 257.7L1205.4 246.9 M1205.4 246.9L1198.8 243.4 M1112.8 224.1L1113.4 228.0 M1112.8 224.1L1122.2 224.2 M1113.4 228.0L1122.6 231.0 M1124.0 230.6L1122.6 231.0 M1124.0 230.6L1122.8 224.8 M1122.2 224.2L1122.8 224.8 M1110.3 219.0L1112.8 224.1 M1110.3 219.0L1104.7 221.9 M1132.3 226.5L1133.8 221.9 M1132.3 226.5L1125.6 223.1 M1125.6 223.1L1125.7 222.6 M1125.7 222.6L1132.7 219.7 M1133.8 221.9L1132.7 219.7 M1132.0 229.6L1127.9 231.9 M1132.0 229.6L1132.3 226.5 M1127.9 231.9L1124.0 230.6 M1122.8 224.8L1125.6 223.1 M1191.5 265.0L1190.6 265.2 M1190.6 265.2L1188.5 266.9 M1190.6 265.2L1178.4 259.5 M1132.0 229.6L1134.5 230.9 M1127.8 238.8L1127.9 231.9 M1127.8 238.8L1135.6 237.9 M1135.6 237.9L1134.5 230.9 M1134.5 230.9L1149.8 232.2 M1175.4 229.6L1166.5 238.0 M1175.4 229.6L1164.3 231.1 M1164.3 231.1L1166.5 238.0 M1036.2 261.6L1039.7 269.2 M1030.1 259.4L1036.2 261.6 M1110.9 268.8L1111.1 260.0 M1110.9 268.8L1102.4 270.6 M1099.5 264.6L1102.4 270.6 M1099.5 264.6L1100.8 261.9 M1111.1 260.0L1100.8 261.9 M1113.4 228.0L1112.6 229.8 M1122.6 231.0L1118.5 236.8 M1118.5 236.8L1112.6 229.8 M1060.1 272.1L1065.6 273.3 M1055.4 278.4L1060.1 272.1 M1101.4 233.5L1101.5 232.8 M1054.8 288.1L1055.3 288.2 M1065.6 273.3L1073.9 279.2 M1073.9 279.2L1055.3 288.2 M1102.5 303.1L1095.6 283.8 M1116.2 291.8L1108.4 294.4 M1108.4 294.4L1102.5 303.1 M1063.0 294.6L1055.3 288.2 M1118.4 280.6L1114.6 273.8 M1118.4 280.6L1108.9 285.8 M1105.3 279.2L1108.9 285.8 M1105.3 279.2L1113.4 273.5 M1113.4 273.5L1114.6 273.8 M1108.4 294.4L1108.9 285.8 M1122.6 282.8L1118.4 280.6 M1101.8 278.0L1095.6 283.8 M1101.8 278.0L1105.3 279.2 M1110.9 268.8L1113.4 273.5 M1101.8 278.0L1101.3 276.7 M1101.3 276.7L1102.4 270.6 M1117.4 272.0L1118.3 252.2 M1117.4 272.0L1114.6 273.8 M1111.1 260.0L1118.3 252.2 M1091.7 267.8L1098.4 275.2 M1099.5 264.6L1091.7 267.8 M1101.3 276.7L1098.4 275.2 M1092.5 248.8L1100.8 261.9 M1165.4 252.7L1174.5 262.1 M1165.4 252.7L1162.4 253.9 M1174.5 262.1L1162.5 255.7 M1162.4 253.9L1162.5 255.7 M1168.5 241.9L1183.0 241.3 M1168.5 241.9L1168.7 250.8 M1168.7 250.8L1179.9 253.2 M1179.9 253.2L1185.6 247.7 M1183.0 241.3L1186.2 246.1 M1185.6 247.7L1186.2 246.1 M1166.0 239.7L1166.5 238.0 M1166.0 239.7L1168.5 241.9 M1166.0 239.7L1154.2 241.7 M1154.2 241.7L1158.6 250.9 M1158.6 250.9L1162.4 253.9 M1165.4 252.7L1168.7 250.8 M1178.4 259.5L1179.9 253.2 M1192.2 259.1L1185.6 247.7 M1198.8 243.4L1186.2 246.1 M1174.9 266.5L1162.3 256.4 M1160.6 262.6L1162.3 256.4 M1162.5 255.7L1162.3 256.4 M1135.6 237.9L1139.4 242.5 M1149.8 232.2L1150.2 237.1 M1150.2 237.1L1139.4 242.5 M1154.2 241.7L1153.1 241.1 M1150.2 237.1L1153.1 241.1 M1112.6 247.8L1115.6 248.8 M1112.6 247.8L1103.5 234.2 M1115.6 248.8L1111.5 231.0 M1103.5 234.2L1111.5 231.0 M1118.3 252.2L1118.6 251.8 M1118.6 251.8L1115.8 248.9 M1092.5 248.8L1112.6 247.8 M1115.8 248.9L1115.6 248.8 M1101.4 233.5L1103.5 234.2 M1118.5 236.8L1115.8 248.9 M1112.6 229.8L1111.5 231.0 M1158.6 250.9L1151.4 257.0 M1160.6 262.6L1152.3 260.2 M1152.3 260.2L1151.4 257.0 M1153.1 241.1L1146.2 251.9 M1151.4 257.0L1150.8 256.7 M1150.8 256.7L1146.2 251.9 M1137.8 244.5L1145.0 252.3 M1137.8 244.5L1139.4 242.5 M1145.0 252.3L1146.2 251.9 M1134.3 302.1L1130.6 282.9 M1138.4 281.5L1130.6 282.9 M1127.7 282.6L1127.7 282.5 M1130.6 282.9L1127.7 282.5 M1152.3 260.2L1148.4 265.6 M1150.8 256.7L1142.8 260.8 M1142.8 260.8L1148.4 265.6 M1143.9 253.4L1140.6 258.7 M1143.9 253.4L1132.9 247.6 M1140.6 258.7L1125.6 254.9 M1125.6 254.9L1123.7 252.4 M1132.9 247.6L1124.5 251.5 M1124.5 251.5L1123.7 252.4 M1145.0 252.3L1143.9 253.4 M1141.6 260.2L1142.8 260.8 M1141.6 260.2L1140.6 258.7 M1137.8 244.5L1132.9 247.6 M1127.8 238.8L1124.5 251.5 M1118.6 251.8L1123.7 252.4 M1126.4 258.7L1130.7 266.9 M1126.4 258.7L1121.0 271.0 M1130.7 266.9L1126.7 275.2 M1121.0 271.0L1126.7 275.2 M1117.4 272.0L1121.0 271.0 M1125.6 254.9L1126.4 258.7 M1127.7 282.5L1126.7 275.2 M1138.1 274.7L1136.8 269.8 M1149.0 268.5L1138.3 268.4 M1136.8 269.8L1138.3 268.4 M1138.4 281.5L1138.1 274.7 M1130.7 266.9L1136.8 269.8 M1148.4 265.6L1149.0 268.5 M1141.6 260.2L1138.3 268.4" fill="none" stroke="#c9cdd6" stroke-width="0.8" clip-path="url(#landclip)"/><path d="M1145 237 Q1152 230 1160 232 Q1168 226 1178 228 Q1186 225 1192 231 Q1200 226 1208 230 Q1212 234 1214 232" fill="none" stroke="#c9cdd6" stroke-width="0.8"/><path d="M1178 228 Q1186 236 1198 234 Q1203 238 1206 240" fill="none" stroke="#c9cdd6" stroke-width="0.8"/><path d="M1160 232 Q1162 240 1166 245 Q1172 248 1178 246 Q1186 246 1192 252" fill="none" stroke="#c9cdd6" stroke-width="0.8"/><path d="M1150 240 Q1156 244 1160 250" fill="none" stroke="#c9cdd6" stroke-width="0.8"/><path d="M1140 235 Q1146 238 1150 248" fill="none" stroke="#c9cdd6" stroke-width="0.8"/><path d="M1138 215 L1145 222 L1144 232" fill="none" stroke="#c9cdd6" stroke-width="0.8"/><path d="M1186 252 Q1190 258 1196 258" fill="none" stroke="#c9cdd6" stroke-width="0.8"/><path d="M1196 246 Q1200 250 1204 248" fill="none" stroke="#c9cdd6" stroke-width="0.8"/><path d="M1222 238 L1225 235 M1216 244 L1219 242" stroke="#e35c5e" stroke-width="1.4"/><path d="M1037 252 L1039 256 M1034 262 L1048 268" stroke="#c9cdd6" stroke-width="0.8"/></svg>
<div class="panel" style="left:895px;top:346px;width:441px;height:146px"><div class="ph"><div class="t" style="letter-spacing:-0.24px">Top Application / Site By Traffic</div></div></div>
<svg style="left:1261.5px;top:354px" width="14" height="14" viewBox="-7 -7 14 14"><rect x="-1.1" y="-5.8" width="2.2" height="2.2" fill="#fff" transform="rotate(0)"/><rect x="-1.1" y="-5.8" width="2.2" height="2.2" fill="#fff" transform="rotate(45)"/><rect x="-1.1" y="-5.8" width="2.2" height="2.2" fill="#fff" transform="rotate(90)"/><rect x="-1.1" y="-5.8" width="2.2" height="2.2" fill="#fff" transform="rotate(135)"/><rect x="-1.1" y="-5.8" width="2.2" height="2.2" fill="#fff" transform="rotate(180)"/><rect x="-1.1" y="-5.8" width="2.2" height="2.2" fill="#fff" transform="rotate(225)"/><rect x="-1.1" y="-5.8" width="2.2" height="2.2" fill="#fff" transform="rotate(270)"/><rect x="-1.1" y="-5.8" width="2.2" height="2.2" fill="#fff" transform="rotate(315)"/><circle r="4.4" fill="#fff"/><circle r="2.4" fill="#7c88a0"/></svg><svg style="left:1278px;top:359px" width="6" height="5" viewBox="0 0 6 5"><path d="M0 0.5H6L3 4.5Z" fill="#fff"/></svg><svg style="left:1291px;top:356px" width="13" height="12" viewBox="0 0 13 12"><path d="M3 3.5H1V10.5H7V9" fill="none" stroke="#fff" stroke-width="1.2"/><rect x="3.5" y="0.5" width="9" height="8" rx="1" fill="#f4f6fb"/></svg><svg style="left:1315px;top:355px" width="11" height="11" viewBox="0 0 11 11"><path d="M1 1L10 10M10 1L1 10" stroke="#fff" stroke-width="1.8"/></svg>
<div class="a" style="left:896px;top:377px;width:422px;height:21px;background:linear-gradient(#fff,#fafafa);border-bottom:1px solid #e4e9f2"></div>
<div class="a" style="left:1158px;top:377px;width:1px;height:20px;background:#e6ebf4"></div>
<div class="cell" style="left:908px;top:382px">Application / Site</div>
<div class="cell" style="left:1170px;top:382px">Traffic</div>
<svg style="left:1304px;top:385px" width="10" height="6" viewBox="0 0 10 6"><path d="M0 0H10L5 5.5Z" fill="#9a9a9a"/></svg>
<div class="a" style="left:896px;top:399px;width:422px;height:22px;background:#c5d6f7"></div>
<div class="cell" style="left:926px;top:405px">Facebook</div>
<div class="cell" style="left:1166px;top:405px">370 MB</div>
<div class="a" style="left:896px;top:421px;width:422px;height:22px;background:#f8f8f8"></div>
<div class="cell" style="left:926px;top:427px">YouTube</div>
<div class="cell" style="left:1166px;top:427px">265 MB</div>
<div class="a" style="left:896px;top:443px;width:422px;height:22px;background:#ffffff"></div>
<div class="cell" style="left:926px;top:449px">MySpaceIM</div>
<div class="cell" style="left:1166px;top:449px">28 MB</div>
<div class="a" style="left:896px;top:465px;width:422px;height:22px;background:#f8f8f8"></div>
<div class="cell" style="left:926px;top:471px">iTunes</div>
<div class="cell" style="left:1166px;top:471px">25 MB</div>
<svg style="left:905px;top:403px" width="14" height="14" viewBox="0 0 14 14"><rect width="14" height="14" rx="1" fill="#3b5998"/><path d="M7.5 14V7.5H6V5.5H7.5V4Q7.5 2 9.5 2H11V4H10Q9.5 4 9.5 4.5V5.5H11L10.7 7.5H9.5V14Z" fill="#fff"/><rect x="1" y="12" width="6" height="1" fill="#8b9dc3"/></svg>
<svg style="left:903px;top:424px" width="17" height="16" viewBox="0 0 17 16"><text x="8.5" y="6.5" font-size="7" font-weight="bold" text-anchor="middle" fill="#111" font-family="Liberation Sans">You</text><rect x="0.5" y="7.5" width="16" height="8" rx="2" fill="#e02020"/><text x="8.5" y="14" font-size="7" font-weight="bold" text-anchor="middle" fill="#fff" font-family="Liberation Sans">Tube</text></svg>
<svg style="left:904px;top:446px" width="16" height="15" viewBox="0 0 16 15"><circle cx="4" cy="3" r="2.3" fill="#1a3c8a"/><circle cx="9" cy="2.5" r="2.3" fill="#1a3c8a"/><circle cx="13" cy="3.5" r="2" fill="#1a3c8a"/><path d="M1 6H7V14H1Z M6 5H12V14H6Z M11 6H15V13H11Z" fill="#1a3c8a"/></svg>
<svg style="left:904px;top:468px" width="15" height="15" viewBox="0 0 15 15"><circle cx="7.5" cy="7.5" r="7" fill="#3a6ac0"/><circle cx="7.5" cy="7.5" r="5.5" fill="#8ab4f0"/><path d="M6 10.5V4.5L10 3.8V9.5" fill="none" stroke="#1a3070" stroke-width="1.1"/><circle cx="5.3" cy="10.5" r="1.2" fill="#1a3070"/><circle cx="9.3" cy="9.5" r="1.2" fill="#1a3070"/></svg>
<div class="vsb" style="left:1319px;top:377px;height:113px;width:16px;background:#f0f0f0"></div><div class="thumb" style="left:1319px;top:394px;width:16px;height:33px"></div><svg style="left:1323px;top:382px" width="9" height="6" viewBox="0 0 9 6"><path d="M0.8 5L4.5 1.3L8.2 5" fill="none" stroke="#555" stroke-width="2"/></svg><svg style="left:1323px;top:479px" width="9" height="6" viewBox="0 0 9 6"><path d="M0.8 1L4.5 4.7L8.2 1" fill="none" stroke="#555" stroke-width="2"/></svg>
<div class="panel" style="left:895px;top:500px;width:441px;height:132px"><div class="ph"><div class="t" style="letter-spacing:-0.6px">Top Events By Event Count</div></div></div>
<svg style="left:1261.5px;top:508px" width="14" height="14" viewBox="-7 -7 14 14"><rect x="-1.1" y="-5.8" width="2.2" height="2.2" fill="#fff" transform="rotate(0)"/><rect x="-1.1" y="-5.8" width="2.2" height="2.2" fill="#fff" transform="rotate(45)"/><rect x="-1.1" y="-5.8" width="2.2" height="2.2" fill="#fff" transform="rotate(90)"/><rect x="-1.1" y="-5.8" width="2.2" height="2.2" fill="#fff" transform="rotate(135)"/><rect x="-1.1" y="-5.8" width="2.2" height="2.2" fill="#fff" transform="rotate(180)"/><rect x="-1.1" y="-5.8" width="2.2" height="2.2" fill="#fff" transform="rotate(225)"/><rect x="-1.1" y="-5.8" width="2.2" height="2.2" fill="#fff" transform="rotate(270)"/><rect x="-1.1" y="-5.8" width="2.2" height="2.2" fill="#fff" transform="rotate(315)"/><circle r="4.4" fill="#fff"/><circle r="2.4" fill="#7c88a0"/></svg><svg style="left:1278px;top:513px" width="6" height="5" viewBox="0 0 6 5"><path d="M0 0.5H6L3 4.5Z" fill="#fff"/></svg><svg style="left:1291px;top:510px" width="13" height="12" viewBox="0 0 13 12"><path d="M3 3.5H1V10.5H7V9" fill="none" stroke="#fff" stroke-width="1.2"/><rect x="3.5" y="0.5" width="9" height="8" rx="1" fill="#f4f6fb"/></svg><svg style="left:1315px;top:509px" width="11" height="11" viewBox="0 0 11 11"><path d="M1 1L10 10M10 1L1 10" stroke="#fff" stroke-width="1.8"/></svg>
<div class="a" style="left:896px;top:531px;width:422px;height:21px;background:linear-gradient(#fff,#fafafa);border-bottom:1px solid #e4e9f2"></div>
<div class="a" style="left:1160px;top:531px;width:1px;height:20px;background:#e6ebf4"></div>
<div class="cell" style="left:908px;top:535px">Event Name</div>
<div class="cell" style="left:1169px;top:535px">Sessions</div>
<svg style="left:1304px;top:539px" width="10" height="6" viewBox="0 0 10 6"><path d="M0 0H10L5 5.5Z" fill="#9a9a9a"/></svg>
<div class="a" style="left:896px;top:553px;width:422px;height:78px;overflow:hidden">
<div class="a" style="left:0;top:0px;width:422px;height:22px;background:#c5d6f7"></div>
<div class="cell" style="left:7px;top:6px">Application Activity</div>
<div class="cell" style="left:265px;top:6px">217</div>
<div class="a" style="left:0;top:22px;width:422px;height:22px;background:#f8f8f8"></div>
<div class="cell" style="left:7px;top:28px">DLP Incident</div>
<div class="cell" style="left:265px;top:28px">89</div>
<div class="a" style="left:0;top:44px;width:422px;height:22px;background:#ffffff"></div>
<div class="cell" style="left:7px;top:50px">Invalid TCP Flags</div>
<div class="cell" style="left:265px;top:50px">60</div>
<div class="a" style="left:0;top:66px;width:422px;height:22px;background:#f8f8f8"></div>
<div class="cell" style="left:7px;top:72px">HTTP on Non Standard Ports</div>
<div class="cell" style="left:265px;top:72px">50</div>
</div>
<div class="vsb" style="left:1319px;top:531px;height:100px;width:16px;background:#f0f0f0"></div><div class="thumb" style="left:1319px;top:547px;width:16px;height:23px"></div><svg style="left:1323px;top:536px" width="9" height="6" viewBox="0 0 9 6"><path d="M0.8 5L4.5 1.3L8.2 5" fill="none" stroke="#555" stroke-width="2"/></svg><svg style="left:1323px;top:620px" width="9" height="6" viewBox="0 0 9 6"><path d="M0.8 1L4.5 4.7L8.2 1" fill="none" stroke="#555" stroke-width="2"/></svg>
<div class="panel" style="left:895px;top:640px;width:441px;height:82px"><div class="ph"><div class="t" style="letter-spacing:-0.52px">SmartEvent Status</div></div></div>
<svg style="left:1291px;top:650px" width="13" height="12" viewBox="0 0 13 12"><path d="M3 3.5H1V10.5H7V9" fill="none" stroke="#fff" stroke-width="1.2"/><rect x="3.5" y="0.5" width="9" height="8" rx="1" fill="#f4f6fb"/></svg><svg style="left:1315px;top:649px" width="11" height="11" viewBox="0 0 11 11"><path d="M1 1L10 10M10 1L1 10" stroke="#fff" stroke-width="1.8"/></svg>
<div class="cell" style="left:906px;top:678px;font-size:12.5px">SmartEvent Components:</div>
<div class="cell" style="left:909px;top:701px">Status:</div>
<svg style="left:993px;top:702px" width="12" height="12" viewBox="0 0 12 12"><circle cx="6" cy="6" r="6" fill="#6cb33f"/><path d="M3 6.2L5.2 8.3L9 4" fill="none" stroke="#fff" stroke-width="1.6"/></svg>
<div class="cell" style="left:1012px;top:701px;color:#3d7ad8;font-size:12.5px">OK</div>
<div class="cell" style="left:1116px;top:678px;font-size:12.5px">Events received:</div>
<div class="cell" style="left:1116px;top:700px;font-size:12.5px">Last Minute:</div>
<div class="cell" style="left:1216px;top:700px;font-weight:bold;font-size:13px">12</div>
<div class="vsb" style="left:1319px;top:671px;height:50px;width:16px;background:#f0f0f0"></div><svg style="left:1323px;top:676px" width="9" height="6" viewBox="0 0 9 6"><path d="M0.8 5L4.5 1.3L8.2 5" fill="none" stroke="#555" stroke-width="2"/></svg><svg style="left:1323px;top:710px" width="9" height="6" viewBox="0 0 9 6"><path d="M0.8 1L4.5 4.7L8.2 1" fill="none" stroke="#555" stroke-width="2"/></svg>
<div class="panel" style="left:17px;top:498px;width:870px;height:225px"><div class="ph"><div class="t" style="letter-spacing:-0.32px;left:5px">Important Security Events</div></div></div>
<svg style="left:812.5px;top:506px" width="14" height="14" viewBox="-7 -7 14 14"><rect x="-1.1" y="-5.8" width="2.2" height="2.2" fill="#fff" transform="rotate(0)"/><rect x="-1.1" y="-5.8" width="2.2" height="2.2" fill="#fff" transform="rotate(45)"/><rect x="-1.1" y="-5.8" width="2.2" height="2.2" fill="#fff" transform="rotate(90)"/><rect x="-1.1" y="-5.8" width="2.2" height="2.2" fill="#fff" transform="rotate(135)"/><rect x="-1.1" y="-5.8" width="2.2" height="2.2" fill="#fff" transform="rotate(180)"/><rect x="-1.1" y="-5.8" width="2.2" height="2.2" fill="#fff" transform="rotate(225)"/><rect x="-1.1" y="-5.8" width="2.2" height="2.2" fill="#fff" transform="rotate(270)"/><rect x="-1.1" y="-5.8" width="2.2" height="2.2" fill="#fff" transform="rotate(315)"/><circle r="4.4" fill="#fff"/><circle r="2.4" fill="#7c88a0"/></svg><svg style="left:829px;top:511px" width="6" height="5" viewBox="0 0 6 5"><path d="M0 0.5H6L3 4.5Z" fill="#fff"/></svg><svg style="left:842px;top:508px" width="13" height="12" viewBox="0 0 13 12"><path d="M3 3.5H1V10.5H7V9" fill="none" stroke="#fff" stroke-width="1.2"/><rect x="3.5" y="0.5" width="9" height="8" rx="1" fill="#f4f6fb"/></svg><svg style="left:866px;top:507px" width="11" height="11" viewBox="0 0 11 11"><path d="M1 1L10 10M10 1L1 10" stroke="#fff" stroke-width="1.8"/></svg>
<div class="a" style="left:18px;top:529px;width:851px;height:22px;background:linear-gradient(#fff 0,#fff 45%,#f3f4f7 45%,#f3f4f7 100%)"></div>
<div class="a" style="left:184px;top:529px;width:1px;height:22px;background:#e3e6ee"></div>
<div class="a" style="left:234px;top:529px;width:1px;height:22px;background:#e3e6ee"></div>
<div class="a" style="left:311px;top:529px;width:1px;height:22px;background:#e3e6ee"></div>
<div class="a" style="left:338px;top:529px;width:1px;height:22px;background:#e3e6ee"></div>
<div class="a" style="left:448px;top:529px;width:1px;height:22px;background:#e3e6ee"></div>
<div class="a" style="left:475px;top:529px;width:1px;height:22px;background:#e3e6ee"></div>
<div class="a" style="left:585px;top:529px;width:1px;height:22px;background:#e3e6ee"></div>
<div class="a" style="left:612px;top:529px;width:1px;height:22px;background:#e3e6ee"></div>
<div class="a" style="left:712px;top:529px;width:1px;height:22px;background:#e3e6ee"></div>
<div class="a" style="left:739px;top:529px;width:1px;height:22px;background:#e3e6ee"></div>
<div class="cell" style="left:22px;top:535px;font-size:11.5px;color:#5b6a86;letter-spacing:-0.3px">Event Name</div>
<div class="cell" style="left:189px;top:535px;font-size:11.5px;color:#5b6a86;letter-spacing:-0.3px">Sever...</div>
<div class="cell" style="left:239px;top:535px;font-size:11.5px;color:#5b6a86;letter-spacing:-0.3px">Start Time</div>
<div class="cell" style="left:315px;top:535px;font-size:11.5px;color:#5b6a86;letter-spacing:-0.3px">S..</div>
<div class="cell" style="left:343px;top:535px;font-size:11.5px;color:#5b6a86;letter-spacing:-0.3px">Source</div>
<div class="cell" style="left:453px;top:535px;font-size:11.5px;color:#5b6a86;letter-spacing:-0.3px">D..</div>
<div class="cell" style="left:480px;top:535px;font-size:11.5px;color:#5b6a86;letter-spacing:-0.3px">Destination</div>
<div class="cell" style="left:590px;top:535px;font-size:11.5px;color:#5b6a86;letter-spacing:-0.3px">A..</div>
<div class="cell" style="left:616px;top:535px;font-size:11.5px;color:#5b6a86;letter-spacing:-0.3px">Confidence Level</div>
<div class="cell" style="left:716px;top:535px;font-size:11.5px;color:#5b6a86;letter-spacing:-0.3px">F...</div>
<div class="cell" style="left:744px;top:535px;font-size:11.5px;color:#5b6a86;letter-spacing:-0.3px">Attack Name</div>
<div class="a" style="left:18px;top:552px;width:851px;height:154px;overflow:hidden">
<div class="a" style="left:0;top:0px;width:851px;height:23px;background:#c5d6f7"></div>
<div class="cell" style="left:4px;top:5px;letter-spacing:-0.15px">General HTTP Worm Catcher</div>
<div class="a" style="left:173px;top:5px;width:37px;height:11px"><svg width="37" height="11" viewBox="0 0 37 11"><defs><linearGradient id="go" x1="0" y1="0" x2="0" y2="1"><stop offset="0" stop-color="#ffc49a"/><stop offset="0.45" stop-color="#f89a4a"/><stop offset="1" stop-color="#e2702a"/></linearGradient></defs><rect x="0.5" y="0.5" width="36" height="10" rx="3.8" fill="#fff" stroke="#b8703a" stroke-width="0.9"/><path d="M4.5 1H29V10H4.5Q1 10 1 6.5V4.5Q1 1 4.5 1Z" fill="url(#go)"/><rect x="7.5" y="1" width="0.8" height="9" fill="#b8703a" opacity="0.55"/><rect x="8.3" y="1" width="0.8" height="9" fill="#fff" opacity="0.35"/><rect x="14.5" y="1" width="0.8" height="9" fill="#b8703a" opacity="0.55"/><rect x="15.3" y="1" width="0.8" height="9" fill="#fff" opacity="0.35"/><rect x="21.5" y="1" width="0.8" height="9" fill="#b8703a" opacity="0.55"/><rect x="22.3" y="1" width="0.8" height="9" fill="#fff" opacity="0.35"/><rect x="28.5" y="1" width="0.8" height="9" fill="#b8703a" opacity="0.55"/><rect x="29.3" y="1" width="0.8" height="9" fill="#fff" opacity="0.35"/></svg></div>
<div class="cell" style="left:221px;top:5px;letter-spacing:-0.55px">10:24:16 15...</div>
<div class="a" style="left:298px;top:5px;width:16px;height:11px"><svg width="16" height="11" viewBox="0 0 16 11"><rect width="16" height="11" fill="#1e9a3a" stroke="#0a4a1a" stroke-width="0.8"/><path d="M8 1.5L14 5.5L8 9.5L2 5.5Z" fill="#f5d800"/><circle cx="8" cy="5.5" r="2.3" fill="#1a3a8a"/></svg></div>
<div class="cell" style="left:325px;top:5px;letter-spacing:-0.4px">192.201.2.133</div>
<div class="a" style="left:435px;top:5px;width:16px;height:11px"><svg width="16" height="11" viewBox="0 0 16 11"><rect width="16" height="11" fill="#fff"/><g fill="#e03a3a"><rect y="0" width="16" height="1.2"/><rect y="2.4" width="16" height="1.2"/><rect y="4.8" width="16" height="1.2"/><rect y="7.2" width="16" height="1.2"/><rect y="9.6" width="16" height="1.4"/></g><rect width="7" height="6" fill="#3a4aa8"/><g fill="#fff"><circle cx="1.5" cy="1.5" r="0.5"/><circle cx="3.5" cy="1.5" r="0.5"/><circle cx="5.5" cy="1.5" r="0.5"/><circle cx="2.5" cy="3" r="0.5"/><circle cx="4.5" cy="3" r="0.5"/><circle cx="1.5" cy="4.5" r="0.5"/><circle cx="3.5" cy="4.5" r="0.5"/><circle cx="5.5" cy="4.5" r="0.5"/></g></svg></div>
<div class="cell" style="left:462px;top:5px;letter-spacing:-0.3px">MelodyMash-de...</div>
<div class="a" style="left:572px;top:4px;width:16px;height:15px"><svg width="16" height="15" viewBox="0 0 16 15"><path d="M8 0.5Q11.5 2 15.5 1.5Q16 10 8 14.5Q0 10 0.5 1.5Q4.5 2 8 0.5Z" fill="#4f84d8"/><path d="M8 0.5Q4.5 2 0.5 1.5L1 4Q5 4 8 2.5Z" fill="#7aa6e8" opacity="0.6"/></svg></div>
<div class="cell" style="left:599px;top:5px">Medium-High</div>
<div class="cell" style="left:726px;top:5px">HTTP Worm Catcher</div>
<div class="a" style="left:0;top:23px;width:851px;height:23px;background:#f7f7f7"></div>
<div class="cell" style="left:4px;top:28px;letter-spacing:-0.15px">DLP Incident</div>
<div class="a" style="left:173px;top:28px;width:37px;height:11px"><svg width="37" height="11" viewBox="0 0 37 11"><defs><linearGradient id="gr" x1="0" y1="0" x2="0" y2="1"><stop offset="0" stop-color="#ffb0b4"/><stop offset="0.45" stop-color="#f5646c"/><stop offset="1" stop-color="#d84850"/></linearGradient></defs><rect x="0.5" y="0.5" width="36" height="10" rx="3.8" fill="#fff" stroke="#b04048" stroke-width="0.9"/><rect x="1" y="1" width="35" height="9" rx="3.3" fill="url(#gr)"/><rect x="7.5" y="1" width="0.8" height="9" fill="#b04048" opacity="0.55"/><rect x="8.3" y="1" width="0.8" height="9" fill="#fff" opacity="0.35"/><rect x="14.5" y="1" width="0.8" height="9" fill="#b04048" opacity="0.55"/><rect x="15.3" y="1" width="0.8" height="9" fill="#fff" opacity="0.35"/><rect x="21.5" y="1" width="0.8" height="9" fill="#b04048" opacity="0.55"/><rect x="22.3" y="1" width="0.8" height="9" fill="#fff" opacity="0.35"/><rect x="28.5" y="1" width="0.8" height="9" fill="#b04048" opacity="0.55"/><rect x="29.3" y="1" width="0.8" height="9" fill="#fff" opacity="0.35"/></svg></div>
<div class="cell" style="left:221px;top:28px;letter-spacing:-0.55px">10:24:53 15...</div>
<div class="a" style="left:298px;top:28px;width:16px;height:11px"><svg width="16" height="11" viewBox="0 0 16 11"><rect width="16" height="11" fill="#fff"/><g fill="#e03a3a"><rect y="0" width="16" height="1.2"/><rect y="2.4" width="16" height="1.2"/><rect y="4.8" width="16" height="1.2"/><rect y="7.2" width="16" height="1.2"/><rect y="9.6" width="16" height="1.4"/></g><rect width="7" height="6" fill="#3a4aa8"/><g fill="#fff"><circle cx="1.5" cy="1.5" r="0.5"/><circle cx="3.5" cy="1.5" r="0.5"/><circle cx="5.5" cy="1.5" r="0.5"/><circle cx="2.5" cy="3" r="0.5"/><circle cx="4.5" cy="3" r="0.5"/><circle cx="1.5" cy="4.5" r="0.5"/><circle cx="3.5" cy="4.5" r="0.5"/><circle cx="5.5" cy="4.5" r="0.5"/></g></svg></div>
<div class="cell" style="left:325px;top:28px;letter-spacing:-0.4px">FrankFlash-deskt...</div>
<div class="a" style="left:435px;top:28px;width:16px;height:11px"><svg width="16" height="11" viewBox="0 0 16 11"><rect width="16" height="3.7" fill="#d03030"/><rect y="3.7" width="16" height="3.6" fill="#fff"/><rect y="7.3" width="16" height="3.7" fill="#2a7a3a"/><rect y="9.5" width="16" height="1.5" fill="#111"/></svg></div>
<div class="cell" style="left:462px;top:28px;letter-spacing:-0.3px">192.84.2.3</div>
<div class="a" style="left:572px;top:27px;width:16px;height:15px"><svg width="16" height="15" viewBox="0 0 16 15"><rect x="0.5" y="0.5" width="14" height="10" rx="1" fill="#f5e08a" stroke="#b09a3a" stroke-width="0.8"/><path d="M0.5 1L7.5 6L14.5 1" fill="none" stroke="#b09a3a" stroke-width="0.8"/><path d="M5 9H10V6.5L15.5 10.5L10 14.5V12H5Z" fill="#4aaa3a" stroke="#2a7a2a" stroke-width="0.6"/></svg></div>
<div class="cell" style="left:599px;top:28px">N/A</div>
<div class="a" style="left:702px;top:28px;width:11px;height:12px"><svg width="11" height="12" viewBox="0 0 11 12"><path d="M2 2L5 11" stroke="#555" stroke-width="0.9"/><path d="M1.5 2Q5 0 6.5 1.5Q8 3 10.5 1.5L10 6Q7.5 7.5 6 6Q4.5 4.5 3 6Z" fill="#e01818"/></svg></div>
<div class="a" style="left:0;top:46px;width:851px;height:23px;background:#ffffff"></div>
<div class="cell" style="left:4px;top:51px;letter-spacing:-0.15px">DLP Incident</div>
<div class="a" style="left:173px;top:51px;width:37px;height:11px"><svg width="37" height="11" viewBox="0 0 37 11"><defs><linearGradient id="gr" x1="0" y1="0" x2="0" y2="1"><stop offset="0" stop-color="#ffb0b4"/><stop offset="0.45" stop-color="#f5646c"/><stop offset="1" stop-color="#d84850"/></linearGradient></defs><rect x="0.5" y="0.5" width="36" height="10" rx="3.8" fill="#fff" stroke="#b04048" stroke-width="0.9"/><rect x="1" y="1" width="35" height="9" rx="3.3" fill="url(#gr)"/><rect x="7.5" y="1" width="0.8" height="9" fill="#b04048" opacity="0.55"/><rect x="8.3" y="1" width="0.8" height="9" fill="#fff" opacity="0.35"/><rect x="14.5" y="1" width="0.8" height="9" fill="#b04048" opacity="0.55"/><rect x="15.3" y="1" width="0.8" height="9" fill="#fff" opacity="0.35"/><rect x="21.5" y="1" width="0.8" height="9" fill="#b04048" opacity="0.55"/><rect x="22.3" y="1" width="0.8" height="9" fill="#fff" opacity="0.35"/><rect x="28.5" y="1" width="0.8" height="9" fill="#b04048" opacity="0.55"/><rect x="29.3" y="1" width="0.8" height="9" fill="#fff" opacity="0.35"/></svg></div>
<div class="cell" style="left:221px;top:51px;letter-spacing:-0.55px">10:27:15 15...</div>
<div class="a" style="left:298px;top:51px;width:16px;height:11px"><svg width="16" height="11" viewBox="0 0 16 11"><rect width="16" height="11" fill="#fff" stroke="#ddd" stroke-width="0.6"/><circle cx="8" cy="5.5" r="2.6" fill="#e02020"/></svg></div>
<div class="cell" style="left:325px;top:51px;letter-spacing:-0.4px">GeraldoCash-lap...</div>
<div class="a" style="left:435px;top:51px;width:16px;height:11px"><svg width="16" height="11" viewBox="0 0 16 11"><rect width="16" height="11" fill="#fff"/><g fill="#e03a3a"><rect y="0" width="16" height="1.2"/><rect y="2.4" width="16" height="1.2"/><rect y="4.8" width="16" height="1.2"/><rect y="7.2" width="16" height="1.2"/><rect y="9.6" width="16" height="1.4"/></g><rect width="7" height="6" fill="#3a4aa8"/><g fill="#fff"><circle cx="1.5" cy="1.5" r="0.5"/><circle cx="3.5" cy="1.5" r="0.5"/><circle cx="5.5" cy="1.5" r="0.5"/><circle cx="2.5" cy="3" r="0.5"/><circle cx="4.5" cy="3" r="0.5"/><circle cx="1.5" cy="4.5" r="0.5"/><circle cx="3.5" cy="4.5" r="0.5"/><circle cx="5.5" cy="4.5" r="0.5"/></g></svg></div>
<div class="cell" style="left:462px;top:51px;letter-spacing:-0.3px">192.204.2.212</div>
<div class="a" style="left:572px;top:50px;width:16px;height:15px"><svg width="16" height="15" viewBox="0 0 16 15"><rect x="0.5" y="0.5" width="14" height="10" rx="1" fill="#f5e08a" stroke="#b09a3a" stroke-width="0.8"/><path d="M0.5 1L7.5 6L14.5 1" fill="none" stroke="#b09a3a" stroke-width="0.8"/><path d="M5 9H10V6.5L15.5 10.5L10 14.5V12H5Z" fill="#4aaa3a" stroke="#2a7a2a" stroke-width="0.6"/></svg></div>
<div class="cell" style="left:599px;top:51px">N/A</div>
<div class="a" style="left:702px;top:51px;width:11px;height:12px"><svg width="11" height="12" viewBox="0 0 11 12"><path d="M2 2L5 11" stroke="#555" stroke-width="0.9"/><path d="M1.5 2Q5 0 6.5 1.5Q8 3 10.5 1.5L10 6Q7.5 7.5 6 6Q4.5 4.5 3 6Z" fill="#e01818"/></svg></div>
<div class="a" style="left:0;top:69px;width:851px;height:23px;background:#f7f7f7"></div>
<div class="cell" style="left:4px;top:74px;letter-spacing:-0.15px">HTTP Page Flood Attack</div>
<div class="a" style="left:173px;top:74px;width:37px;height:11px"><svg width="37" height="11" viewBox="0 0 37 11"><defs><linearGradient id="go" x1="0" y1="0" x2="0" y2="1"><stop offset="0" stop-color="#ffc49a"/><stop offset="0.45" stop-color="#f89a4a"/><stop offset="1" stop-color="#e2702a"/></linearGradient></defs><rect x="0.5" y="0.5" width="36" height="10" rx="3.8" fill="#fff" stroke="#b8703a" stroke-width="0.9"/><path d="M4.5 1H29V10H4.5Q1 10 1 6.5V4.5Q1 1 4.5 1Z" fill="url(#go)"/><rect x="7.5" y="1" width="0.8" height="9" fill="#b8703a" opacity="0.55"/><rect x="8.3" y="1" width="0.8" height="9" fill="#fff" opacity="0.35"/><rect x="14.5" y="1" width="0.8" height="9" fill="#b8703a" opacity="0.55"/><rect x="15.3" y="1" width="0.8" height="9" fill="#fff" opacity="0.35"/><rect x="21.5" y="1" width="0.8" height="9" fill="#b8703a" opacity="0.55"/><rect x="22.3" y="1" width="0.8" height="9" fill="#fff" opacity="0.35"/><rect x="28.5" y="1" width="0.8" height="9" fill="#b8703a" opacity="0.55"/><rect x="29.3" y="1" width="0.8" height="9" fill="#fff" opacity="0.35"/></svg></div>
<div class="cell" style="left:221px;top:74px;letter-spacing:-0.55px">10:32:52 15...</div>
<div class="cell" style="left:325px;top:74px;letter-spacing:-0.4px"></div>
<div class="a" style="left:435px;top:74px;width:16px;height:11px"><svg width="16" height="11" viewBox="0 0 16 11"><rect width="16" height="11" fill="#fff"/><g fill="#e03a3a"><rect y="0" width="16" height="1.2"/><rect y="2.4" width="16" height="1.2"/><rect y="4.8" width="16" height="1.2"/><rect y="7.2" width="16" height="1.2"/><rect y="9.6" width="16" height="1.4"/></g><rect width="7" height="6" fill="#3a4aa8"/><g fill="#fff"><circle cx="1.5" cy="1.5" r="0.5"/><circle cx="3.5" cy="1.5" r="0.5"/><circle cx="5.5" cy="1.5" r="0.5"/><circle cx="2.5" cy="3" r="0.5"/><circle cx="4.5" cy="3" r="0.5"/><circle cx="1.5" cy="4.5" r="0.5"/><circle cx="3.5" cy="4.5" r="0.5"/><circle cx="5.5" cy="4.5" r="0.5"/></g></svg></div>
<div class="cell" style="left:462px;top:74px;letter-spacing:-0.3px">FloydFlash-lapto...</div>
<div class="a" style="left:572px;top:73px;width:16px;height:15px"><svg width="16" height="15" viewBox="0 0 16 15"><path d="M8 0.5Q11.5 2 15.5 1.5Q16 10 8 14.5Q0 10 0.5 1.5Q4.5 2 8 0.5Z" fill="#4f84d8"/><path d="M8 0.5Q4.5 2 0.5 1.5L1 4Q5 4 8 2.5Z" fill="#7aa6e8" opacity="0.6"/></svg></div>
<div class="cell" style="left:599px;top:74px">N/A</div>
<div class="cell" style="left:726px;top:74px">HttpFlood</div>
<div class="a" style="left:0;top:92px;width:851px;height:23px;background:#ffffff"></div>
<div class="cell" style="left:4px;top:97px;letter-spacing:-0.15px">Trend Micro ServerProtect ...</div>
<div class="a" style="left:173px;top:97px;width:37px;height:11px"><svg width="37" height="11" viewBox="0 0 37 11"><defs><linearGradient id="go" x1="0" y1="0" x2="0" y2="1"><stop offset="0" stop-color="#ffc49a"/><stop offset="0.45" stop-color="#f89a4a"/><stop offset="1" stop-color="#e2702a"/></linearGradient></defs><rect x="0.5" y="0.5" width="36" height="10" rx="3.8" fill="#fff" stroke="#b8703a" stroke-width="0.9"/><path d="M4.5 1H29V10H4.5Q1 10 1 6.5V4.5Q1 1 4.5 1Z" fill="url(#go)"/><rect x="7.5" y="1" width="0.8" height="9" fill="#b8703a" opacity="0.55"/><rect x="8.3" y="1" width="0.8" height="9" fill="#fff" opacity="0.35"/><rect x="14.5" y="1" width="0.8" height="9" fill="#b8703a" opacity="0.55"/><rect x="15.3" y="1" width="0.8" height="9" fill="#fff" opacity="0.35"/><rect x="21.5" y="1" width="0.8" height="9" fill="#b8703a" opacity="0.55"/><rect x="22.3" y="1" width="0.8" height="9" fill="#fff" opacity="0.35"/><rect x="28.5" y="1" width="0.8" height="9" fill="#b8703a" opacity="0.55"/><rect x="29.3" y="1" width="0.8" height="9" fill="#fff" opacity="0.35"/></svg></div>
<div class="cell" style="left:221px;top:97px;letter-spacing:-0.55px">10:41:17 15...</div>
<div class="a" style="left:298px;top:97px;width:16px;height:11px"><svg width="16" height="11" viewBox="0 0 16 11"><rect width="5.3" height="11" fill="#111"/><rect x="5.3" width="5.4" height="11" fill="#f5d400"/><rect x="10.7" width="5.3" height="11" fill="#e02828"/></svg></div>
<div class="cell" style="left:325px;top:97px;letter-spacing:-0.4px">192.195.2.31</div>
<div class="a" style="left:435px;top:97px;width:16px;height:11px"><svg width="16" height="11" viewBox="0 0 16 11"><rect width="16" height="11" fill="#2a3a9a"/><path d="M0 0L16 11M16 0L0 11" stroke="#fff" stroke-width="2.2"/><path d="M0 0L16 11M16 0L0 11" stroke="#d02020" stroke-width="0.8"/><path d="M8 0V11M0 5.5H16" stroke="#fff" stroke-width="3.2"/><path d="M8 0V11M0 5.5H16" stroke="#d02020" stroke-width="1.6"/></svg></div>
<div class="cell" style="left:462px;top:97px;letter-spacing:-0.3px">MandyMash-des...</div>
<div class="a" style="left:572px;top:96px;width:16px;height:15px"><svg width="16" height="15" viewBox="0 0 16 15"><path d="M8 0.5Q11.5 2 15.5 1.5Q16 10 8 14.5Q0 10 0.5 1.5Q4.5 2 8 0.5Z" fill="#4f84d8"/><path d="M8 0.5Q4.5 2 0.5 1.5L1 4Q5 4 8 2.5Z" fill="#7aa6e8" opacity="0.6"/></svg></div>
<div class="cell" style="left:599px;top:97px">Medium-High</div>
<div class="cell" style="left:726px;top:97px">Trend Micro ServerProtect</div>
<div class="a" style="left:0;top:115px;width:851px;height:23px;background:#f7f7f7"></div>
<div class="cell" style="left:4px;top:120px;letter-spacing:-0.15px">Threat Emulation Incident</div>
<div class="a" style="left:173px;top:120px;width:37px;height:11px"><svg width="37" height="11" viewBox="0 0 37 11"><defs><linearGradient id="gr" x1="0" y1="0" x2="0" y2="1"><stop offset="0" stop-color="#ffb0b4"/><stop offset="0.45" stop-color="#f5646c"/><stop offset="1" stop-color="#d84850"/></linearGradient></defs><rect x="0.5" y="0.5" width="36" height="10" rx="3.8" fill="#fff" stroke="#b04048" stroke-width="0.9"/><rect x="1" y="1" width="35" height="9" rx="3.3" fill="url(#gr)"/><rect x="7.5" y="1" width="0.8" height="9" fill="#b04048" opacity="0.55"/><rect x="8.3" y="1" width="0.8" height="9" fill="#fff" opacity="0.35"/><rect x="14.5" y="1" width="0.8" height="9" fill="#b04048" opacity="0.55"/><rect x="15.3" y="1" width="0.8" height="9" fill="#fff" opacity="0.35"/><rect x="21.5" y="1" width="0.8" height="9" fill="#b04048" opacity="0.55"/><rect x="22.3" y="1" width="0.8" height="9" fill="#fff" opacity="0.35"/><rect x="28.5" y="1" width="0.8" height="9" fill="#b04048" opacity="0.55"/><rect x="29.3" y="1" width="0.8" height="9" fill="#fff" opacity="0.35"/></svg></div>
<div class="cell" style="left:221px;top:120px;letter-spacing:-0.55px">10:49:51 15...</div>
<div class="a" style="left:298px;top:120px;width:16px;height:11px"><svg width="16" height="11" viewBox="0 0 16 11"><rect width="16" height="5.5" fill="#e03a3a"/><rect y="5.5" width="16" height="5.5" fill="#f4f4f4"/></svg></div>
<div class="cell" style="left:325px;top:120px;letter-spacing:-0.4px">192.116.2.209</div>
<div class="a" style="left:435px;top:120px;width:16px;height:11px"><svg width="16" height="11" viewBox="0 0 16 11"><rect width="16" height="11" fill="#fff" stroke="#ddd" stroke-width="0.6"/><circle cx="8" cy="5.5" r="2.6" fill="#e02020"/></svg></div>
<div class="cell" style="left:462px;top:120px;letter-spacing:-0.3px">CeliaCash-lapto...</div>
<div class="a" style="left:572px;top:119px;width:16px;height:15px"><svg width="16" height="15" viewBox="0 0 16 15"><path d="M8 0.5Q11.5 2 15.5 1.5Q16 10 8 14.5Q0 10 0.5 1.5Q4.5 2 8 0.5Z" fill="#fdf3a8" stroke="#b0a880" stroke-width="0.9"/><path d="M2.5 7H5.5L7 4L9 10L10.5 7H13.5" fill="none" stroke="#7a7a6a" stroke-width="0.9"/></svg></div>
<div class="cell" style="left:599px;top:120px">N/A</div>
<div class="a" style="left:0;top:138px;width:851px;height:23px;background:#ffffff"></div>
<div class="cell" style="left:4px;top:143px;letter-spacing:-0.15px">Bot Incident</div>
<div class="a" style="left:173px;top:143px;width:37px;height:11px"><svg width="37" height="11" viewBox="0 0 37 11"><defs><linearGradient id="go" x1="0" y1="0" x2="0" y2="1"><stop offset="0" stop-color="#ffc49a"/><stop offset="0.45" stop-color="#f89a4a"/><stop offset="1" stop-color="#e2702a"/></linearGradient></defs><rect x="0.5" y="0.5" width="36" height="10" rx="3.8" fill="#fff" stroke="#b8703a" stroke-width="0.9"/><path d="M4.5 1H29V10H4.5Q1 10 1 6.5V4.5Q1 1 4.5 1Z" fill="url(#go)"/><rect x="7.5" y="1" width="0.8" height="9" fill="#b8703a" opacity="0.55"/><rect x="8.3" y="1" width="0.8" height="9" fill="#fff" opacity="0.35"/><rect x="14.5" y="1" width="0.8" height="9" fill="#b8703a" opacity="0.55"/><rect x="15.3" y="1" width="0.8" height="9" fill="#fff" opacity="0.35"/><rect x="21.5" y="1" width="0.8" height="9" fill="#b8703a" opacity="0.55"/><rect x="22.3" y="1" width="0.8" height="9" fill="#fff" opacity="0.35"/><rect x="28.5" y="1" width="0.8" height="9" fill="#b8703a" opacity="0.55"/><rect x="29.3" y="1" width="0.8" height="9" fill="#fff" opacity="0.35"/></svg></div>
<div class="cell" style="left:221px;top:143px;letter-spacing:-0.55px">11:01:38 15...</div>
<div class="a" style="left:298px;top:143px;width:16px;height:11px"><svg width="16" height="11" viewBox="0 0 16 11"><rect width="16" height="11" fill="#fff"/><g fill="#e03a3a"><rect y="0" width="16" height="1.2"/><rect y="2.4" width="16" height="1.2"/><rect y="4.8" width="16" height="1.2"/><rect y="7.2" width="16" height="1.2"/><rect y="9.6" width="16" height="1.4"/></g><rect width="7" height="6" fill="#3a4aa8"/><g fill="#fff"><circle cx="1.5" cy="1.5" r="0.5"/><circle cx="3.5" cy="1.5" r="0.5"/><circle cx="5.5" cy="1.5" r="0.5"/><circle cx="2.5" cy="3" r="0.5"/><circle cx="4.5" cy="3" r="0.5"/><circle cx="1.5" cy="4.5" r="0.5"/><circle cx="3.5" cy="4.5" r="0.5"/><circle cx="5.5" cy="4.5" r="0.5"/></g></svg></div>
<div class="cell" style="left:325px;top:143px;letter-spacing:-0.4px">EugeneEyelash-l...</div>
<div class="a" style="left:435px;top:143px;width:16px;height:11px"><svg width="16" height="11" viewBox="0 0 16 11"><rect width="16" height="11" fill="#1e3a8a"/><path d="M0 0L7 5M7 0L0 5M3.5 0V5M0 2.5H7" stroke="#fff" stroke-width="1"/><circle cx="12" cy="3" r="0.8" fill="#fff"/><circle cx="11" cy="8" r="0.9" fill="#fff"/><circle cx="4" cy="8.5" r="1" fill="#fff"/></svg></div>
<div class="cell" style="left:462px;top:143px;letter-spacing:-0.3px">192.203.2.151</div>
<div class="a" style="left:572px;top:142px;width:16px;height:15px"><svg width="16" height="15" viewBox="0 0 16 15"><path d="M8 0.5Q11.5 2 15.5 1.5Q16 10 8 14.5Q0 10 0.5 1.5Q4.5 2 8 0.5Z" fill="#4f84d8"/><path d="M8 0.5Q4.5 2 0.5 1.5L1 4Q5 4 8 2.5Z" fill="#7aa6e8" opacity="0.6"/></svg></div>
<div class="cell" style="left:599px;top:143px">Medium-High</div>
</div>
<div class="a" style="left:869px;top:552px;width:17px;height:1px;background:#f0f0f0"></div>
<div class="vsb" style="left:869px;top:529px;height:177px;width:17px;background:#f0f0f0"></div><div class="thumb" style="left:869px;top:547px;width:17px;height:17px"></div><svg style="left:873px;top:534px" width="9" height="6" viewBox="0 0 9 6"><path d="M0.8 5L4.5 1.3L8.2 5" fill="none" stroke="#555" stroke-width="2"/></svg><svg style="left:873px;top:695px" width="9" height="6" viewBox="0 0 9 6"><path d="M0.8 1L4.5 4.7L8.2 1" fill="none" stroke="#555" stroke-width="2"/></svg>
<div class="a" style="left:18px;top:706px;width:851px;height:16px;background:#f0f0f0"></div>
<div class="thumb" style="left:35px;top:706px;width:170px;height:16px"></div>
<svg style="left:23px;top:709px" width="6" height="9" viewBox="0 0 6 9"><path d="M5 0.8L1.3 4.5L5 8.2" fill="none" stroke="#555" stroke-width="2"/></svg>
<svg style="left:857px;top:709px" width="6" height="9" viewBox="0 0 6 9"><path d="M1 0.8L4.7 4.5L1 8.2" fill="none" stroke="#555" stroke-width="2"/></svg>
<div class="a" style="left:869px;top:706px;width:17px;height:16px;background:#f0f0f0"></div>
<div class="a" id="status"></div>
<div class="cell" style="left:7px;top:740px;font-size:11.5px;letter-spacing:-0.2px">Ready</div>
<div class="cell" style="left:449px;top:740px;letter-spacing:-0.45px">Server Time: 16.12.2015 0:09</div>
<div class="sep" style="left:629px"></div>
<div class="cell" style="left:634px;top:740px">Demo Mode</div>
<div class="sep" style="left:941px"></div>
<div class="sep" style="left:1142px"></div>
<div class="sep" style="left:1227px"></div>
<div class="sep" style="left:1257px"></div>
<div class="sep" style="left:1293px"></div>
<div class="sep" style="left:1328px"></div>
<svg style="left:1338px;top:745px" width="9" height="9" viewBox="0 0 9 9"><g fill="#b0b0b0"><rect x="6" y="0" width="2" height="2"/><rect x="3" y="3" width="2" height="2"/><rect x="6" y="3" width="2" height="2"/><rect x="0" y="6" width="2" height="2"/><rect x="3" y="6" width="2" height="2"/><rect x="6" y="6" width="2" height="2"/></g></svg>
</body></html>
